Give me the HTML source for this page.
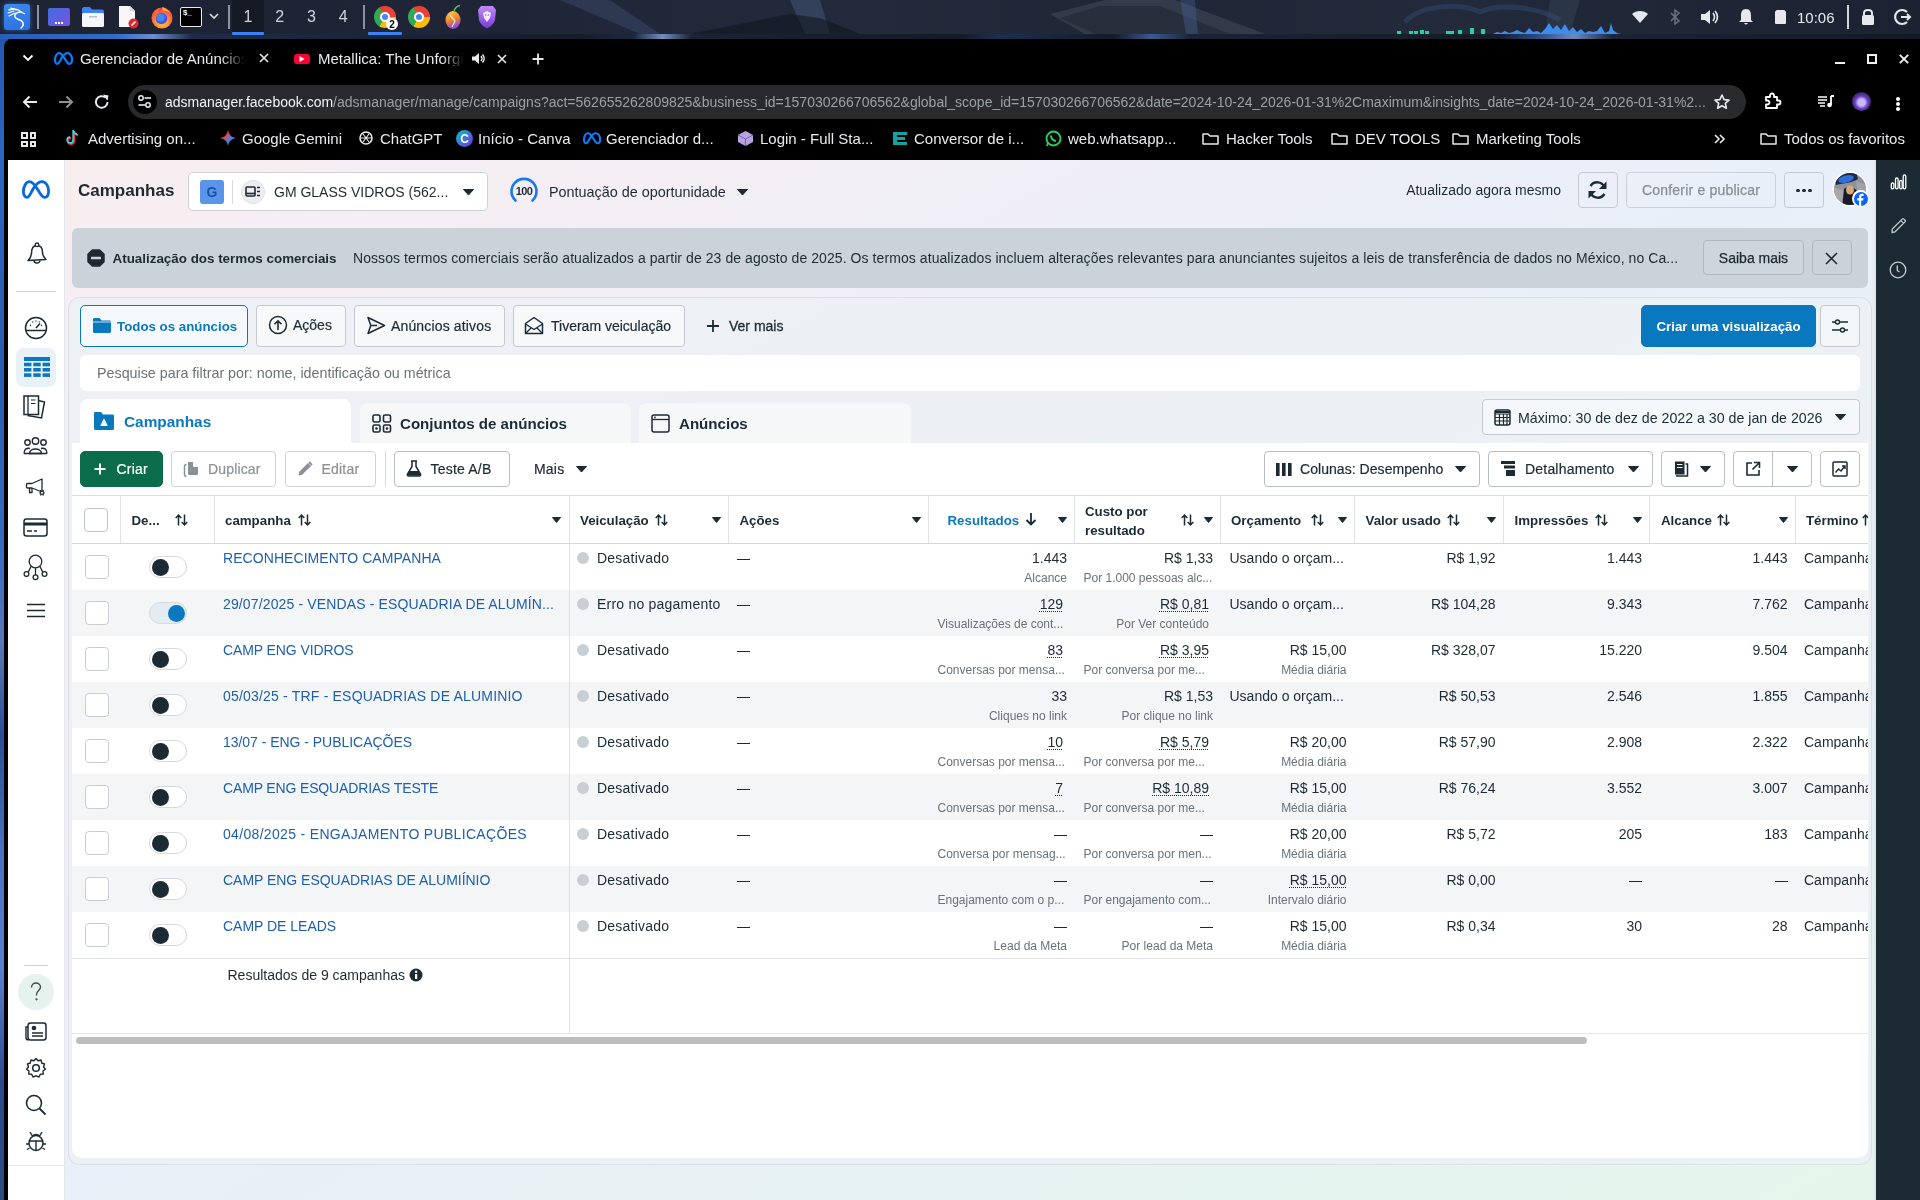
<!DOCTYPE html>
<html><head><meta charset="utf-8"><title>Gerenciador de Anúncios</title>
<style>
html,body{margin:0;padding:0;}
body{width:1920px;height:1200px;overflow:hidden;position:relative;font-family:"Liberation Sans", sans-serif;background:#161c2a;}
.a{position:absolute;box-sizing:border-box;}
.t{position:absolute;white-space:nowrap;font-family:"Liberation Sans", sans-serif;}
svg.a{overflow:visible;}
</style></head><body>
<div id="root" style="position:absolute;left:0;top:0;width:1920px;height:1200px;overflow:hidden;will-change:transform;">
<div class="a" style="left:0px;top:0px;width:1920px;height:39px;background:linear-gradient(90deg,#1d2333 0%,#1f2536 25%,#222a3b 45%,#1f2636 60%,#222a3b 75%,#1c2231 100%);"></div>
<svg class="a" style="left:0px;top:0px;" width="1920" height="39" viewBox="0 0 1920 39"><polygon points="560,0 610,0 660,34 640,34" fill="#5a7ab0" opacity="0.22"/><polygon points="790,0 820,0 830,34 805,34" fill="#6a8ac0" opacity="0.25"/><polygon points="690,34 790,14 820,18 860,34" fill="#10141c" opacity="0.55"/><polygon points="1050,14 1105,0 1175,0 1265,34 1085,34" fill="#3b4252" opacity="0.75"/><polygon points="1060,18 1100,6 1160,6 1230,34 1095,34" fill="#262c38" opacity="0.8"/><polygon points="1180,0 1195,0 1198,34 1186,34" fill="#4a6aa0" opacity="0.35"/><path d="M1405 22 C1420 5 1460 2 1480 12 C1500 2 1540 8 1560 20" stroke="#3a5a8a" stroke-width="5" fill="none" opacity="0.35"/><polygon points="1550,0 1580,0 1570,34 1545,34" fill="#4a5a78" opacity="0.25"/></svg>
<div class="a" style="left:0px;top:34px;width:1920px;height:5px;background:linear-gradient(90deg,#2a5fb5 0%,#2f6cc4 6%,#6a8fd0 8%,#1c2c48 10%,#161d2c 30%,#1a2840 33%,#6f8fc0 34.5%,#1a2436 36%,#141a26 50%,#1a3050 52%,#141b28 58%,#3a5a90 60%,#1a2436 62%,#161c28 78%,#2a4a80 80%,#6a8ac0 82%,#1a2436 84%,#131a26 100%);"></div>
<div class="a" style="left:4px;top:4px;width:26px;height:26px;background:linear-gradient(160deg,#3d8bf0,#2a6fe0);border-radius:3px;box-shadow:0 0 5px rgba(60,140,255,0.6);"></div>
<svg class="a" style="left:6px;top:6px;" width="22" height="22" viewBox="0 0 22 22"><path d="M3 4 C7 2 12 3 15 6 C11 6 8 8 9 11 C10 14 16 13 17 17 C18 20 16 21 15 22" stroke="#fff" stroke-width="1.5" fill="none" stroke-linecap="round"/><path d="M2 7 L8 5 M3 10 L9 7 M5 2 L10 4" stroke="#fff" stroke-width="1.1" stroke-linecap="round"/><path d="M15 6 L19 8" stroke="#fff" stroke-width="1.2"/></svg>
<div class="a" style="left:37px;top:5px;width:2px;height:24px;background:#8a93a5;"></div>
<div class="a" style="left:48px;top:8px;width:22px;height:18px;background:linear-gradient(135deg,#3f6ee8,#7a52d8);border-radius:2px;"></div>
<div class="a" style="left:55px;top:22px;width:8px;height:2px;background:repeating-linear-gradient(90deg,#fff 0 2px,transparent 2px 3px);"></div>
<svg class="a" style="left:81px;top:6px;" width="24" height="22" viewBox="0 0 24 22"><path d="M1 3 C1 2 2 1 3 1 H9 L11 3.5 H21 C22 3.5 23 4.5 23 5.5 V8 H1 Z" fill="#3b82f6"/><rect x="1" y="7" width="22" height="14" rx="1.5" fill="#f4f6f9"/><rect x="8" y="10" width="8" height="1.5" fill="#b8bec8"/></svg>
<svg class="a" style="left:117px;top:5px;" width="22" height="24" viewBox="0 0 22 24"><path d="M2 1 H13 L18 6 V22 H2 Z" fill="#f7f7f8"/><path d="M13 1 V6 H18 Z" fill="#d6d9de"/><circle cx="16.5" cy="18.5" r="5" fill="#e0282e"/><path d="M14.5 20.5 L18.5 16.5" stroke="#fff" stroke-width="1.6"/></svg>
<svg class="a" style="left:150px;top:5px;" width="24" height="24" viewBox="0 0 24 24"><defs><radialGradient id="ffg" cx="0.5" cy="0.7" r="0.7"><stop offset="0" stop-color="#ffd24a"/><stop offset="0.5" stop-color="#ff8a2a"/><stop offset="1" stop-color="#e8305a"/></radialGradient></defs><circle cx="12" cy="13" r="10.5" fill="url(#ffg)"/><path d="M12 2 C16 3 20 6 21 10 C19 6 15 5 13 6 Z" fill="#ffb03a"/><circle cx="11.5" cy="13.5" r="5.8" fill="#5a4ee0"/><circle cx="10.5" cy="12.5" r="4" fill="#3a8af0"/><path d="M3 9 C5 4 9 3 11 3 C8 5 6 8 7 12 Z" fill="#ff6a2a"/></svg>
<div class="a" style="left:180px;top:7px;width:22px;height:20px;background:#000;border:1.5px solid #e8e8e8;border-radius:2px;"></div>
<div class="t " style="top:9.23px;font-size:8px;line-height:8px;color:#fff;font-weight:bold;left:183px;">$_</div>
<svg class="a" style="left:209px;top:13px;" width="10" height="6" viewBox="0 0 10 6"><path d="M1 1 L5 5 L9 1" stroke="#ddd" stroke-width="1.6" fill="none"/></svg>
<div class="a" style="left:228px;top:5px;width:2px;height:24px;background:#8a93a5;"></div>
<div class="a" style="left:232px;top:0px;width:32px;height:34px;background:rgba(0,0,0,0.28);"></div>
<div class="a" style="left:232px;top:32px;width:32px;height:3px;background:#3b82f6;border-radius:1px;"></div>
<div class="t " style="top:9.46px;font-size:16px;line-height:16px;color:#d0d4dc;left:248.0px;transform:translateX(-50%);">1</div>
<div class="t " style="top:9.46px;font-size:16px;line-height:16px;color:#d0d4dc;left:279.7px;transform:translateX(-50%);">2</div>
<div class="t " style="top:9.46px;font-size:16px;line-height:16px;color:#d0d4dc;left:311.4px;transform:translateX(-50%);">3</div>
<div class="t " style="top:9.46px;font-size:16px;line-height:16px;color:#d0d4dc;left:343.1px;transform:translateX(-50%);">4</div>
<div class="a" style="left:363px;top:5px;width:2px;height:24px;background:#8a93a5;"></div>
<div class="a" style="left:368px;top:32px;width:34px;height:3px;background:#3b82f6;border-radius:1px;"></div>
<div class="a" style="left:374px;top:6px;width:22px;height:22px;background:conic-gradient(from -30deg,#ea4335 0 120deg,#fbbc04 120deg 240deg,#34a853 240deg 360deg);border-radius:50%;"></div>
<div class="a" style="left:380px;top:12px;width:10px;height:10px;background:#4285f4;border:2px solid #fff;border-radius:50%;"></div>
<div class="a" style="left:408px;top:6px;width:22px;height:22px;background:conic-gradient(from -30deg,#ea4335 0 120deg,#fbbc04 120deg 240deg,#34a853 240deg 360deg);border-radius:50%;"></div>
<div class="a" style="left:414px;top:12px;width:10px;height:10px;background:#4285f4;border:2px solid #fff;border-radius:50%;"></div>
<div class="a" style="left:386px;top:18px;width:12px;height:12px;background:#fff;border-radius:50%;"></div>
<div class="t " style="top:19.54px;font-size:10px;line-height:10px;color:#000;font-weight:bold;left:392px;transform:translateX(-50%);">2</div>
<svg class="a" style="left:444px;top:5px;" width="20" height="25" viewBox="0 0 20 25"><defs><linearGradient id="org" x1="0" y1="0" x2="0.3" y2="1"><stop offset="0" stop-color="#ffd84a"/><stop offset="0.55" stop-color="#f08a2a"/><stop offset="1" stop-color="#8a4ad8"/></linearGradient></defs><ellipse cx="9" cy="15" rx="7.5" ry="9" fill="url(#org)"/><path d="M10 6 C11 3 13 1 16 0.5" stroke="#5ac85a" stroke-width="1.5" fill="none"/><path d="M6 10 L11 16 L8 22" stroke="#fff" stroke-width="1.2" fill="none" opacity="0.8"/></svg>
<svg class="a" style="left:477px;top:5px;" width="20" height="24" viewBox="0 0 20 24"><defs><linearGradient id="brv" x1="0" y1="0" x2="0" y2="1"><stop offset="0" stop-color="#c08af8"/><stop offset="1" stop-color="#7a3ad8"/></linearGradient></defs><path d="M4 1 H16 L19 5 L18 15 C17 19 13 22 10 23.5 C7 22 3 19 2 15 L1 5 Z" fill="url(#brv)"/><path d="M6 8 L10 6 L14 8 L13 13 L10 17 L7 13 Z" fill="#fff" opacity="0.85"/><path d="M8 10 H9.3 M10.7 10 H12" stroke="#7a3ad8" stroke-width="1"/></svg>
<div class="a" style="left:1397px;top:31px;width:4px;height:3px;background:#22d3a0;"></div>
<div class="a" style="left:1409px;top:31px;width:4px;height:3px;background:#22d3a0;"></div>
<div class="a" style="left:1414px;top:31px;width:4px;height:3px;background:#22d3a0;"></div>
<div class="a" style="left:1420px;top:30px;width:4px;height:4px;background:#22d3a0;"></div>
<div class="a" style="left:1425px;top:31px;width:4px;height:3px;background:#22d3a0;"></div>
<div class="a" style="left:1446px;top:31px;width:4px;height:3px;background:#22d3a0;"></div>
<div class="a" style="left:1450px;top:31px;width:4px;height:3px;background:#22d3a0;"></div>
<div class="a" style="left:1458px;top:30px;width:4px;height:4px;background:#22d3a0;"></div>
<div class="a" style="left:1470px;top:28px;width:4px;height:6px;background:#22d3a0;"></div>
<div class="a" style="left:1481px;top:29px;width:4px;height:5px;background:#22d3a0;"></div>
<svg class="a" style="left:1493px;top:20px;" width="130" height="14" viewBox="0 0 130 14"><path d="M0 14 L4 12 L8 13 L12 11 L16 13 L20 12 L24 10 L28 12 L32 13 L36 8 L40 12 L44 11 L48 13 L52 9 L56 3 L60 9 L64 5 L68 10 L72 4 L76 11 L80 7 L84 12 L88 9 L92 13 L96 11 L100 12 L104 11 L108 6 L112 13 L116 11 L118 3 L120 10 L124 13 L128 14 L130 14 Z" fill="#3b8ef0"/></svg>
<svg class="a" style="left:1631px;top:10px;" width="18" height="14" viewBox="0 0 18 14"><path d="M9 13 L1 4 C5 0 13 0 17 4 Z" fill="#e6e8ec"/></svg>
<svg class="a" style="left:1669px;top:8px;" width="12" height="18" viewBox="0 0 12 18"><path d="M2 5 L10 13 L6 16 L6 2 L10 5 L2 13" stroke="#6b7280" stroke-width="1.5" fill="none"/></svg>
<svg class="a" style="left:1700px;top:8px;" width="20" height="18" viewBox="0 0 20 18"><path d="M1 6 H5 L10 2 V16 L5 12 H1 Z" fill="#e6e8ec"/><path d="M13 5 Q16 9 13 13 M15 3 Q20 9 15 15" stroke="#e6e8ec" stroke-width="1.6" fill="none"/></svg>
<svg class="a" style="left:1737px;top:8px;" width="18" height="18" viewBox="0 0 18 18"><path d="M9 1 C5 1 4 4 4 8 V12 L2 14 H16 L14 12 V8 C14 4 13 1 9 1 Z M7 15 Q9 18 11 15 Z" fill="#e6e8ec"/></svg>
<div class="a" style="left:1775px;top:11px;width:11px;height:13px;background:#e6e8ec;border-radius:1px;"></div>
<div class="a" style="left:1776px;top:9.5px;width:9px;height:2px;background:#e6e8ec;border-radius:1px 1px 0 0;"></div>
<div class="t " style="top:9.80px;font-size:15px;line-height:15px;color:#e6e8ec;left:1797px;">10:06</div>
<div class="a" style="left:1847px;top:5px;width:2px;height:24px;background:#cfd3da;"></div>
<svg class="a" style="left:1860px;top:7px;" width="16" height="19" viewBox="0 0 16 19"><path d="M4 8 V6 C4 2 12 2 12 6 V8" stroke="#e6e8ec" stroke-width="2" fill="none"/><rect x="2" y="8" width="12" height="10" rx="1.5" fill="#e6e8ec"/></svg>
<svg class="a" style="left:1893px;top:8px;" width="18" height="18" viewBox="0 0 18 18"><path d="M14 4 A7 7 0 1 0 14 14" stroke="#e6e8ec" stroke-width="2.2" fill="none"/><path d="M8 9 H17 M14 6 L17 9 L14 12" stroke="#e6e8ec" stroke-width="2" fill="none"/></svg>
<div class="a" style="left:0px;top:39px;width:8px;height:1161px;background:linear-gradient(180deg,#2458b0 0%,#2d66c0 10%,#2a5cb0 30%,#3a6cc0 45%,#5a78b8 52%,#2a4f98 60%,#4a70c0 70%,#5a80d0 80%,#2a4a90 90%,#304a80 100%);"></div>
<div class="a" style="left:4px;top:39px;width:1916px;height:1161px;background:#000;border-top-left-radius:8px;"></div>
<svg class="a" style="left:22px;top:54px;" width="12" height="8" viewBox="0 0 12 8"><path d="M1.5 1.5 L6 6 L10.5 1.5" stroke="#fff" stroke-width="1.8" fill="none"/></svg>
<svg class="a" style="left:54px;top:52px;" width="19" height="13" viewBox="0 0 28 19"><path d="M7.5 1.6 C11 1.6 13.5 6 16 10 C18.5 14 20 17.4 22.6 17.4 C25 17.4 26.6 14.8 26.6 11 C26.6 6 24 1.6 19.6 1.6 C16 1.6 13.5 5 11 9 C9 12.5 7.5 17.4 5 17.4 C3 17.4 1.4 15 1.4 11.5 C1.4 6.5 4 1.6 7.5 1.6 Z" stroke="#0a7cff" stroke-width="3.2" fill="none"/></svg>
<div class="t" style="left:80px;top:51.3px;font-size:15px;line-height:15px;color:#e8eaed;width:165px;overflow:hidden;-webkit-mask-image:linear-gradient(90deg,#000 85%,transparent);">Gerenciador de Anúncios</div>
<svg class="a" style="left:259px;top:53px;" width="10" height="10" viewBox="0 0 10 10"><path d="M1 1 L9 9 M9 1 L1 9" stroke="#e8eaed" stroke-width="1.6"/></svg>
<div class="a" style="left:294px;top:54px;width:16px;height:10px;background:#ff0033;border-radius:3px;"></div>
<svg class="a" style="left:299px;top:56px;" width="6" height="6" viewBox="0 0 6 6"><path d="M0.5 0 L5.5 3 L0.5 6 Z" fill="#fff"/></svg>
<div class="t" style="left:318px;top:51.3px;font-size:15px;line-height:15px;color:#e8eaed;width:146px;overflow:hidden;-webkit-mask-image:linear-gradient(90deg,#000 85%,transparent);">Metallica: The Unforgiven</div>
<svg class="a" style="left:471px;top:52px;" width="14" height="13" viewBox="0 0 14 13"><path d="M1 4.5 H4 L8 1 V12 L4 8.5 H1 Z" fill="#e8eaed"/><path d="M10 4 Q12 6.5 10 9 M11.5 2.5 Q15 6.5 11.5 10.5" stroke="#e8eaed" stroke-width="1.4" fill="none"/></svg>
<svg class="a" style="left:497px;top:54px;" width="10" height="10" viewBox="0 0 10 10"><path d="M1 1 L9 9 M9 1 L1 9" stroke="#e8eaed" stroke-width="1.6"/></svg>
<svg class="a" style="left:532px;top:53px;" width="12" height="12" viewBox="0 0 12 12"><path d="M6 0.5 V11.5 M0.5 6 H11.5" stroke="#e8eaed" stroke-width="1.8"/></svg>
<div class="a" style="left:1835px;top:62px;width:10px;height:2px;background:#f0f0f0;"></div>
<div class="a" style="left:1867px;top:54px;width:10px;height:10px;border:2px solid #f0f0f0;"></div>
<svg class="a" style="left:1899px;top:54px;" width="10" height="10" viewBox="0 0 10 10"><path d="M0.8 0.8 L9.2 9.2 M9.2 0.8 L0.8 9.2" stroke="#f0f0f0" stroke-width="1.9"/></svg>
<svg class="a" style="left:22px;top:95px;" width="16" height="14" viewBox="0 0 16 14"><path d="M15 7 H2 M7.5 1.5 L2 7 L7.5 12.5" stroke="#e8eaed" stroke-width="2" fill="none"/></svg>
<svg class="a" style="left:58px;top:95px;" width="16" height="14" viewBox="0 0 16 14"><path d="M1 7 H14 M8.5 1.5 L14 7 L8.5 12.5" stroke="#8c8f94" stroke-width="2" fill="none"/></svg>
<svg class="a" style="left:94px;top:94px;" width="16" height="16" viewBox="0 0 16 16"><path d="M13.5 8 A5.8 5.8 0 1 1 11.5 3.6" stroke="#e8eaed" stroke-width="2" fill="none"/><path d="M9 0.5 L14.5 1.5 L13.5 6.5" fill="#e8eaed"/><path d="M10 1 L14 2 L13 6 Z" fill="#e8eaed"/></svg>
<div class="a" style="left:128px;top:85px;width:1618px;height:34px;background:#282a2d;border-radius:17px;"></div>
<div class="a" style="left:133px;top:90px;width:24px;height:24px;background:#000;border-radius:50%;"></div>
<svg class="a" style="left:137px;top:94px;" width="16" height="16" viewBox="0 0 16 16"><circle cx="4" cy="4" r="2.2" stroke="#e8eaed" stroke-width="1.5" fill="none"/><path d="M7.5 4 H14" stroke="#e8eaed" stroke-width="1.6"/><circle cx="11" cy="11" r="2.2" stroke="#e8eaed" stroke-width="1.5" fill="none"/><path d="M1.5 11 H8" stroke="#e8eaed" stroke-width="1.6"/></svg>
<div class="t" style="left:165px;top:94.8px;font-size:14px;line-height:14px;color:#9aa0a6;"><span style="color:#f1f3f4">adsmanager.facebook.com</span>/adsmanager/manage/campaigns?act=562655262809825&amp;business_id=157030266706562&amp;global_scope_id=157030266706562&amp;date=2024-10-24_2026-01-31%2Cmaximum&amp;insights_date=2024-10-24_2026-01-31%2...</div>
<svg class="a" style="left:1714px;top:94px;" width="16" height="16" viewBox="0 0 16 16"><path d="M8 1 L10.1 5.6 L15 6.1 L11.3 9.4 L12.4 14.3 L8 11.8 L3.6 14.3 L4.7 9.4 L1 6.1 L5.9 5.6 Z" stroke="#e8eaed" stroke-width="1.6" fill="none" stroke-linejoin="round"/></svg>
<svg class="a" style="left:1764px;top:92px;" width="18" height="18" viewBox="0 0 18 18"><path d="M2 5 H6 V3.5 A2 2 0 0 1 10 3.5 V5 H13 V8.5 H14.5 A2 2 0 0 1 14.5 12.5 H13 V16 H2 V12.5 H3.5 A2 2 0 0 0 3.5 8.5 H2 Z" stroke="#fff" stroke-width="1.8" fill="none" stroke-linejoin="round"/></svg>
<svg class="a" style="left:1818px;top:95px;" width="17" height="13" viewBox="0 0 17 13"><path d="M0 2 H9 M0 5 H9 M0 8 H7 M2 11 H7" stroke="#fff" stroke-width="1.6"/><path d="M13 1 H16 M13 1 V10" stroke="#fff" stroke-width="1.8"/><circle cx="11.5" cy="10" r="2.3" fill="#fff"/></svg>
<div class="a" style="left:1852px;top:92px;width:19px;height:19px;background:radial-gradient(circle at 50% 55%,#c8b8ff 0 25%,#6a3fc0 45%,#2a1f4a 80%);border-radius:50%;"></div>
<div class="a" style="left:1896px;top:97px;width:4px;height:4px;background:#fff;border-radius:50%;"></div>
<div class="a" style="left:1896px;top:102px;width:4px;height:4px;background:#fff;border-radius:50%;"></div>
<div class="a" style="left:1896px;top:107px;width:4px;height:4px;background:#fff;border-radius:50%;"></div>
<div class="a" style="left:21px;top:132px;width:6.5px;height:6.5px;border:2px solid #e8eaed;border-radius:0.5px;"></div>
<div class="a" style="left:21px;top:140.5px;width:6.5px;height:6.5px;border:2px solid #e8eaed;border-radius:0.5px;"></div>
<div class="a" style="left:29.5px;top:132px;width:6.5px;height:6.5px;border:2px solid #e8eaed;border-radius:0.5px;"></div>
<div class="a" style="left:29.5px;top:140.5px;width:6.5px;height:6.5px;border:2px solid #e8eaed;border-radius:0.5px;"></div>
<div class="t " style="top:131.30px;font-size:15px;line-height:15px;color:#e8eaed;left:88px;">Advertising on...</div>
<svg class="a" style="left:66px;top:129px;" width="14" height="17" viewBox="0 0 14 17"><path d="M8 2 V12 A3 3 0 1 1 5 9 M8 2 Q9 6 12 6" stroke="#ff2d55" stroke-width="2" fill="none"/><path d="M7 1 V11 A3 3 0 1 1 4 8 M7 1 Q8 5 11 5" stroke="#25f4ee" stroke-width="1.3" fill="none"/></svg>
<div class="t " style="top:131.30px;font-size:15px;line-height:15px;color:#e8eaed;left:242px;">Google Gemini</div>
<svg class="a" style="left:220px;top:130px;" width="16" height="16" viewBox="0 0 16 16"><path d="M8 0 Q9 7 16 8 Q9 9 8 16 Q7 9 0 8 Q7 7 8 0 Z" fill="url(#gg)"/><defs><linearGradient id="gg" x1="0" y1="0" x2="1" y2="1"><stop offset="0" stop-color="#f4b400"/><stop offset="0.35" stop-color="#e8453c"/><stop offset="0.6" stop-color="#4285f4"/><stop offset="1" stop-color="#34a853"/></linearGradient></defs></svg>
<div class="t " style="top:131.30px;font-size:15px;line-height:15px;color:#e8eaed;left:380px;">ChatGPT</div>
<svg class="a" style="left:358px;top:130px;" width="16" height="16" viewBox="0 0 16 16"><circle cx="8" cy="8" r="6" stroke="#e8eaed" stroke-width="1.6" fill="none"/><path d="M5 4 L11 12 M11 4 L5 12 M3 8 H13" stroke="#e8eaed" stroke-width="1.1"/></svg>
<div class="t " style="top:131.30px;font-size:15px;line-height:15px;color:#e8eaed;left:478px;">Início - Canva</div>
<div class="a" style="left:456px;top:130px;width:17px;height:17px;background:linear-gradient(135deg,#00c4cc,#7d2ae8);border-radius:50%;"></div>
<div class="t " style="top:132.84px;font-size:12px;line-height:12px;color:#fff;font-weight:bold;left:464.5px;transform:translateX(-50%);">C</div>
<div class="t " style="top:131.30px;font-size:15px;line-height:15px;color:#e8eaed;left:606px;">Gerenciador d...</div>
<svg class="a" style="left:583px;top:132px;" width="18" height="12.5" viewBox="0 0 28 19"><path d="M7.5 1.6 C11 1.6 13.5 6 16 10 C18.5 14 20 17.4 22.6 17.4 C25 17.4 26.6 14.8 26.6 11 C26.6 6 24 1.6 19.6 1.6 C16 1.6 13.5 5 11 9 C9 12.5 7.5 17.4 5 17.4 C3 17.4 1.4 15 1.4 11.5 C1.4 6.5 4 1.6 7.5 1.6 Z" stroke="#0a7cff" stroke-width="3.2" fill="none"/></svg>
<div class="t " style="top:131.30px;font-size:15px;line-height:15px;color:#e8eaed;left:760px;">Login - Full Sta...</div>
<svg class="a" style="left:737px;top:130px;" width="17" height="17" viewBox="0 0 17 17"><path d="M8.5 1 L16 5 V12 L8.5 16 L1 12 V5 Z" fill="#b9a3e3"/><path d="M8.5 9 L16 5 M8.5 9 L1 5 M8.5 9 V16" stroke="#7d5bb5" stroke-width="1"/></svg>
<div class="t " style="top:131.30px;font-size:15px;line-height:15px;color:#e8eaed;left:914px;">Conversor de i...</div>
<svg class="a" style="left:891px;top:131px;" width="17" height="15" viewBox="0 0 17 15"><path d="M2 1 H16 V4 H6 V6 H14 V9 H6 V11 H16 V14 H2 Z" fill="#14a3a3"/></svg>
<div class="t " style="top:131.30px;font-size:15px;line-height:15px;color:#e8eaed;left:1068px;">web.whatsapp...</div>
<svg class="a" style="left:1045px;top:130px;" width="17" height="17" viewBox="0 0 17 17"><circle cx="8.5" cy="8.5" r="7" stroke="#25d366" stroke-width="1.8" fill="none"/><path d="M2 16 L3.2 12" stroke="#25d366" stroke-width="1.8"/><path d="M6 5.5 Q6 10 11 11" stroke="#25d366" stroke-width="2" fill="none"/></svg>
<div class="t " style="top:131.30px;font-size:15px;line-height:15px;color:#e8eaed;left:1226px;">Hacker Tools</div>
<svg class="a" style="left:1202px;top:132px;" width="17" height="13" viewBox="0 0 17 13"><path d="M1 2 H6 L8 4 H16 V12 H1 Z" stroke="#e8eaed" stroke-width="1.5" fill="none" stroke-linejoin="round"/></svg>
<div class="t " style="top:131.30px;font-size:15px;line-height:15px;color:#e8eaed;left:1355px;">DEV TOOLS</div>
<svg class="a" style="left:1331px;top:132px;" width="17" height="13" viewBox="0 0 17 13"><path d="M1 2 H6 L8 4 H16 V12 H1 Z" stroke="#e8eaed" stroke-width="1.5" fill="none" stroke-linejoin="round"/></svg>
<div class="t " style="top:131.30px;font-size:15px;line-height:15px;color:#e8eaed;left:1476px;">Marketing Tools</div>
<svg class="a" style="left:1452px;top:132px;" width="17" height="13" viewBox="0 0 17 13"><path d="M1 2 H6 L8 4 H16 V12 H1 Z" stroke="#e8eaed" stroke-width="1.5" fill="none" stroke-linejoin="round"/></svg>
<div class="t " style="top:131.30px;font-size:15px;line-height:15px;color:#e8eaed;left:1784px;">Todos os favoritos</div>
<svg class="a" style="left:1760px;top:132px;" width="17" height="13" viewBox="0 0 17 13"><path d="M1 2 H6 L8 4 H16 V12 H1 Z" stroke="#e8eaed" stroke-width="1.5" fill="none" stroke-linejoin="round"/></svg>
<svg class="a" style="left:1714px;top:134px;" width="11" height="10" viewBox="0 0 11 10"><path d="M1 1 L5 5 L1 9 M6 1 L10 5 L6 9" stroke="#e8eaed" stroke-width="1.6" fill="none"/></svg>
<div class="a" style="left:8px;top:160px;width:1868px;height:1040px;background:linear-gradient(to bottom right,#f9eef0 0%,#f2eef5 22%,#e9eff9 48%,#e7f2f3 70%,#e4f6ec 100%);"></div>
<div class="a" style="left:8px;top:160px;width:57px;height:1040px;background:#fff;border-right:1px solid #e3e6ea;"></div>
<div class="a" style="left:8px;top:1165px;width:56px;height:1px;background:#e3e6ea;"></div>
<svg class="a" style="left:22px;top:180px;" width="28" height="19" viewBox="0 0 28 19"><path d="M7.5 1.6 C11 1.6 13.5 6 16 10 C18.5 14 20 17.4 22.6 17.4 C25 17.4 26.6 14.8 26.6 11 C26.6 6 24 1.6 19.6 1.6 C16 1.6 13.5 5 11 9 C9 12.5 7.5 17.4 5 17.4 C3 17.4 1.4 15 1.4 11.5 C1.4 6.5 4 1.6 7.5 1.6 Z" stroke="#0668e1" stroke-width="2.8" fill="none"/></svg>
<svg class="a" style="left:26px;top:242px;" width="22" height="24" viewBox="0 0 22 24"><path d="M11 3.5 C6.5 3.5 5.5 7 5.5 11 C5.5 14.5 4 16.5 2 18.5 L20 17.5 C18 15.5 16.5 13.5 16.5 10.5 C16.5 6.5 15 3.5 11 3.5 Z" stroke="#1c2b33" stroke-width="1.5" fill="none" stroke-linejoin="round"/><circle cx="11" cy="2.8" r="1.8" stroke="#1c2b33" stroke-width="1.3" fill="#fff"/><path d="M8 18.5 A3 2.6 0 0 0 14 18.3" stroke="#1c2b33" stroke-width="1.4" fill="none"/></svg>
<div class="a" style="left:16px;top:291px;width:40px;height:1px;background:#cfd3d8;"></div>
<svg class="a" style="left:24px;top:316px;" width="24" height="24" viewBox="0 0 24 24"><circle cx="12" cy="12" r="10.5" stroke="#1c2b33" stroke-width="1.5" fill="none"/><path d="M2 14.5 H22" stroke="#1c2b33" stroke-width="1.5"/><path d="M12 12 L16 7.5" stroke="#1c2b33" stroke-width="1.6"/><path d="M6 9 L7 9.6 M8.5 5.5 L9 6.5 M12 4.5 V5.5 M15.5 5.5 L15 6.5 M18 9 L17 9.6" stroke="#1c2b33" stroke-width="1.3"/></svg>
<div class="a" style="left:16px;top:348px;width:40px;height:39px;background:#e8f0f8;border-radius:8px;"></div>
<svg class="a" style="left:24px;top:357px;" width="26" height="21" viewBox="0 0 26 21"><rect x="0" y="0" width="26" height="4" fill="#0a78be"/><rect x="0.0" y="5.7" width="7.4" height="3.6" fill="#0a78be"/><rect x="9.3" y="5.7" width="7.4" height="3.6" fill="#0a78be"/><rect x="18.6" y="5.7" width="7.4" height="3.6" fill="#0a78be"/><rect x="0.0" y="11.0" width="7.4" height="3.6" fill="#0a78be"/><rect x="9.3" y="11.0" width="7.4" height="3.6" fill="#0a78be"/><rect x="18.6" y="11.0" width="7.4" height="3.6" fill="#0a78be"/><rect x="0.0" y="16.3" width="7.4" height="3.6" fill="#0a78be"/><rect x="9.3" y="16.3" width="7.4" height="3.6" fill="#0a78be"/><rect x="18.6" y="16.3" width="7.4" height="3.6" fill="#0a78be"/></svg>
<svg class="a" style="left:23px;top:395px;" width="25" height="25" viewBox="0 0 25 25"><rect x="1" y="1" width="14.5" height="18.5" stroke="#1c2b33" stroke-width="1.5" fill="#fff"/><path d="M5 1 V19.5" stroke="#1c2b33" stroke-width="1.3"/><path d="M8 5 H12.5 M8 8.5 H12.5" stroke="#1c2b33" stroke-width="1.2"/><path d="M15.5 5.5 L21.5 7 L18.5 23 L4.5 20.5" stroke="#1c2b33" stroke-width="1.5" fill="none"/></svg>
<svg class="a" style="left:23px;top:436px;" width="25" height="22" viewBox="0 0 25 22"><circle cx="12.5" cy="5" r="3.2" stroke="#1c2b33" stroke-width="1.4" fill="none"/><circle cx="4.5" cy="6.5" r="2.7" stroke="#1c2b33" stroke-width="1.4" fill="none"/><circle cx="20.5" cy="6.5" r="2.7" stroke="#1c2b33" stroke-width="1.4" fill="none"/><path d="M6.5 17.5 C6.5 11.5 18.5 11.5 18.5 17.5 Z" stroke="#1c2b33" stroke-width="1.4" fill="none"/><path d="M1 17.5 C1 13 4 11.5 7 12.5 M24 17.5 C24 13 21 11.5 18 12.5 M1 17.5 H24" stroke="#1c2b33" stroke-width="1.4" fill="none"/></svg>
<svg class="a" style="left:26px;top:478px;" width="20" height="20" viewBox="0 0 20 20"><path d="M1.5 5.5 H6 L16 1 V14 L6 10 H1.5 C0.8 10 0.5 9.5 0.5 9 V6.5 C0.5 6 0.8 5.5 1.5 5.5 Z" stroke="#1c2b33" stroke-width="1.3" fill="none" stroke-linejoin="round"/><path d="M3.5 10 V14.5 H6 V10" stroke="#1c2b33" stroke-width="1.3" fill="none"/><path d="M14.5 12 L17.5 17.5 M17.5 12 L14.5 17.5 M13.3 14.8 H18.7" stroke="#1c2b33" stroke-width="1.3"/><circle cx="16" cy="14.8" r="1.6" fill="#fff" stroke="#1c2b33" stroke-width="1.1"/></svg>
<svg class="a" style="left:23px;top:518px;" width="25" height="19" viewBox="0 0 25 19"><rect x="1" y="1" width="23" height="17" rx="2.5" stroke="#1c2b33" stroke-width="1.5" fill="none"/><rect x="1" y="4.5" width="23" height="3" fill="#1c2b33"/><path d="M4 13 H9 M11 13 H14" stroke="#1c2b33" stroke-width="1.3"/></svg>
<svg class="a" style="left:23px;top:554px;" width="25" height="27" viewBox="0 0 25 27"><circle cx="12.5" cy="7.5" r="6.3" stroke="#1c2b33" stroke-width="1.3" fill="none"/><circle cx="3.5" cy="20" r="2.4" stroke="#1c2b33" stroke-width="1.3" fill="none"/><circle cx="12.5" cy="23.3" r="2.4" stroke="#1c2b33" stroke-width="1.3" fill="none"/><circle cx="21.5" cy="20" r="2.4" stroke="#1c2b33" stroke-width="1.3" fill="none"/><path d="M12.5 13.8 V20.9 M8.2 12.2 L5.2 18.1 M16.8 12.2 L19.8 18.1" stroke="#1c2b33" stroke-width="1.3" fill="none"/></svg>
<svg class="a" style="left:26px;top:603px;" width="20" height="15" viewBox="0 0 20 15"><path d="M1 1.5 H19 M1 7.5 H19 M1 13.5 H19" stroke="#1c2b33" stroke-width="1.5"/></svg>
<div class="a" style="left:24px;top:965px;width:24px;height:1px;background:#cfd3d8;"></div>
<div class="a" style="left:18px;top:974px;width:36px;height:36px;background:#e6f2ed;border-radius:50%;"></div>
<svg class="a" style="left:29px;top:982px;" width="14" height="20" viewBox="0 0 14 20"><path d="M2.5 5.5 C2.5 2.8 4.5 1 7 1 C9.6 1 11.5 2.8 11.5 5.2 C11.5 8.2 7.5 8.8 7.5 12.5 V13.5" stroke="#3d4d55" stroke-width="1.4" fill="none"/><circle cx="7.5" cy="17.3" r="1.1" fill="#3d4d55"/></svg>
<svg class="a" style="left:25px;top:1022px;" width="22" height="19" viewBox="0 0 22 19"><rect x="3" y="1" width="18" height="17" rx="2.5" stroke="#1c2b33" stroke-width="1.5" fill="none"/><path d="M3 5 H1 V15.5 C1 17 2 18 3.5 18" stroke="#1c2b33" stroke-width="1.4" fill="none"/><circle cx="9" cy="6" r="2.3" fill="#1c2b33"/><path d="M7 11 H18 M7 14 H18" stroke="#1c2b33" stroke-width="1.4"/></svg>
<svg class="a" style="left:25px;top:1057px;" width="22" height="22" viewBox="0 0 22 22"><path d="M11 1.5 L13 3.8 L16 3 L16.7 6 L19.5 7 L18.5 10 L20.5 12.2 L18 14 L18.3 17 L15.3 17.2 L14 20 L11 18.8 L8 20 L6.7 17.2 L3.7 17 L4 14 L1.5 12.2 L3.5 10 L2.5 7 L5.3 6 L6 3 L9 3.8 Z" stroke="#1c2b33" stroke-width="1.4" fill="none" stroke-linejoin="round"/><circle cx="11" cy="11" r="3.3" stroke="#1c2b33" stroke-width="1.5" fill="none"/></svg>
<svg class="a" style="left:25px;top:1094px;" width="22" height="22" viewBox="0 0 22 22"><circle cx="9" cy="9" r="7.5" stroke="#1c2b33" stroke-width="1.6" fill="none"/><path d="M14.5 14.5 L20.5 20.5" stroke="#1c2b33" stroke-width="1.8"/></svg>
<svg class="a" style="left:25px;top:1130px;" width="22" height="22" viewBox="0 0 22 22"><ellipse cx="11" cy="13" rx="7" ry="7.5" stroke="#1c2b33" stroke-width="1.5" fill="none"/><path d="M4 11 H18 M11 11 V20.5 M7 5.5 L5 2 M15 5.5 L17 2 M7 6 Q11 3 15 6" stroke="#1c2b33" stroke-width="1.4" fill="none"/><path d="M4 14 H1 M18 14 H21 M4.5 18 L2 19.5 M17.5 18 L20 19.5" stroke="#1c2b33" stroke-width="1.3"/></svg>
<div class="a" style="left:1876px;top:160px;width:44px;height:1040px;background:#1c2a33;"></div>
<div class="a" style="left:1872px;top:160px;width:4px;height:1040px;background:linear-gradient(90deg,rgba(255,255,255,0),rgba(210,215,222,0.5));"></div>
<svg class="a" style="left:1890px;top:174px;" width="17" height="16" viewBox="0 0 17 16"><rect x="1.3" y="9" width="2.6" height="5.8" rx="1.3" stroke="#fff" stroke-width="1.3" fill="none"/><rect x="5.5" y="4" width="2.6" height="10.8" rx="1.3" stroke="#fff" stroke-width="1.3" fill="none"/><rect x="9.6" y="6.5" width="2.6" height="8.3" rx="1.3" stroke="#fff" stroke-width="1.3" fill="none"/><rect x="13.2" y="1" width="2.6" height="13.8" rx="1.3" stroke="#fff" stroke-width="1.3" fill="none"/></svg>
<svg class="a" style="left:1890px;top:217px;" width="17" height="17" viewBox="0 0 17 17"><path d="M2 15.5 L2.3 12 L12.2 2.1 C12.7 1.6 13.4 1.6 13.9 2.1 L15 3.2 C15.5 3.7 15.5 4.4 15 4.9 L5.1 14.8 Z M10.8 3.6 L13.6 6.4" stroke="#c4c9cd" stroke-width="1.3" fill="none" stroke-linejoin="round"/></svg>
<svg class="a" style="left:1889px;top:261px;" width="18" height="18" viewBox="0 0 18 18"><circle cx="9" cy="9" r="7.8" stroke="#c4c9cd" stroke-width="1.3" fill="none"/><path d="M8.3 4.5 V9.5 L10.5 11" stroke="#c4c9cd" stroke-width="1.4" fill="none"/></svg>
<div class="t " style="top:181.61px;font-size:17px;line-height:17px;color:#1c2b33;font-weight:bold;left:78px;">Campanhas</div>
<div class="a" style="left:188px;top:172px;width:300px;height:39px;background:#fff;border:1px solid #cdd2d7;border-radius:5px;"></div>
<div class="a" style="left:200px;top:180px;width:24px;height:24px;background:#5b95e9;border-radius:3px;"></div>
<div class="t " style="top:185.15px;font-size:14px;line-height:14px;color:#1b4fa3;font-weight:bold;left:212px;transform:translateX(-50%);">G</div>
<div class="a" style="left:232px;top:180px;width:1px;height:24px;background:#d6dadf;"></div>
<div class="a" style="left:241px;top:180px;width:24px;height:24px;background:#eceef1;border:1px solid #dde0e4;border-radius:50%;"></div>
<svg class="a" style="left:245px;top:185px;" width="16" height="14" viewBox="0 0 16 14"><rect x="1" y="2" width="9" height="9" rx="1" stroke="#1c2b33" stroke-width="1.6" fill="none"/><path d="M1 8.5 H10" stroke="#1c2b33" stroke-width="1.6"/><path d="M12 2.5 H15 M12 6.5 H15 M12 10.5 H15" stroke="#1c2b33" stroke-width="1.5"/></svg>
<div class="t " style="top:185.15px;font-size:14px;line-height:14px;color:#1c2b33;left:274px;">GM GLASS VIDROS (562...</div>
<svg class="a" style="left:462.5px;top:189.0px;" width="11" height="6" viewBox="0 0 11 6"><path d="M0.5 0.5 H10.5 L5.5 6 Z" fill="#1c2b33" stroke="#1c2b33" stroke-width="1" stroke-linejoin="round"/></svg>
<svg class="a" style="left:509px;top:176px;" width="30" height="30" viewBox="0 0 30 30"><path d="M6.5 24.5 A12.5 12.5 0 1 1 23.5 24.5" stroke="#1877f2" stroke-width="2.6" fill="none" stroke-linecap="round"/></svg>
<div class="t " style="top:186.19px;font-size:11px;line-height:11px;color:#1c2b33;font-weight:bold;letter-spacing:-0.6px;left:524px;transform:translateX(-50%);">100</div>
<div class="t " style="top:184.81px;font-size:14.4px;line-height:14.4px;color:#1c2b33;left:549px;">Pontuação de oportunidade</div>
<svg class="a" style="left:736.5px;top:189.0px;" width="11" height="6" viewBox="0 0 11 6"><path d="M0.5 0.5 H10.5 L5.5 6 Z" fill="#1c2b33" stroke="#1c2b33" stroke-width="1" stroke-linejoin="round"/></svg>
<div class="t " style="top:183.15px;font-size:14px;line-height:14px;color:#1c2b33;right:359px;">Atualizado agora mesmo</div>
<div class="a" style="left:1578px;top:172px;width:40px;height:36px;background:transparent;border:1px solid #c5cad0;border-radius:4px;"></div>
<svg class="a" style="left:1587px;top:180px;" width="22" height="20" viewBox="0 0 22 20"><path d="M17.5 7 A8 8 0 0 0 3.5 6" stroke="#1c2b33" stroke-width="2.4" fill="none"/><path d="M19 2.5 V8.5 H13" fill="#1c2b33"/><path d="M19.5 1.5 L19.5 9 L12 9 Z" fill="#1c2b33"/><path d="M3.5 13 A8 8 0 0 0 17.5 14" stroke="#1c2b33" stroke-width="2.4" fill="none"/><path d="M1.5 18.5 L1.5 11 L9 11 Z" fill="#1c2b33"/></svg>
<div class="a" style="left:1626px;top:172px;width:150px;height:36px;background:transparent;border:1px solid #cdd1d6;border-radius:4px;"></div>
<div class="t " style="top:183.15px;font-size:14px;line-height:14px;color:#8a8f94;letter-spacing:0.2px;left:1701px;transform:translateX(-50%);-webkit-text-stroke:0.25px #8a8f94;">Conferir e publicar</div>
<div class="a" style="left:1784px;top:172px;width:40px;height:36px;background:transparent;border:1px solid #c5cad0;border-radius:4px;"></div>
<div class="a" style="left:1796.2px;top:188.5px;width:3.6px;height:3.6px;background:#1c2b33;border-radius:50%;"></div>
<div class="a" style="left:1802.2px;top:188.5px;width:3.6px;height:3.6px;background:#1c2b33;border-radius:50%;"></div>
<div class="a" style="left:1808.2px;top:188.5px;width:3.6px;height:3.6px;background:#1c2b33;border-radius:50%;"></div>
<svg class="a" style="left:1832px;top:171px" width="36" height="36" viewBox="0 0 36 36"><defs><clipPath id="av"><circle cx="18" cy="18" r="16"/></clipPath></defs><circle cx="18" cy="18" r="17.5" fill="#fff"/><g clip-path="url(#av)"><rect x="0" y="0" width="36" height="36" fill="#8f9399"/><path d="M2 0 H24 L26 8 C20 12 12 12 4 14 Z" fill="#1c2b4a"/><ellipse cx="14" cy="8" rx="8" ry="3.5" fill="#2f6fd8" transform="rotate(-15 14 8)"/><path d="M0 16 L14 20 L20 36 H0 Z" fill="#a8a8ad"/><path d="M12 18 C16 14 24 16 26 22 L22 36 H10 Z" fill="#1a1c24"/><ellipse cx="18" cy="19" rx="4" ry="4.5" fill="#d8a878"/><path d="M24 10 L34 14 L34 24 L26 24 Z" fill="#a0a4aa"/></g></svg>
<div class="a" style="left:1852px;top:190px;width:17px;height:17px;background:#fff;border-radius:50%;"></div>
<div class="a" style="left:1853.5px;top:191.5px;width:14px;height:14px;background:#0866ff;border-radius:50%;"></div>
<svg class="a" style="left:1856px;top:193px;" width="9" height="13" viewBox="0 0 9 13"><path d="M5.2 13 V7.4 H7.2 L7.5 5.2 H5.2 V4 C5.2 3.3 5.5 2.9 6.3 2.9 H7.6 V1 C7.2 0.9 6.6 0.8 5.9 0.8 C4.2 0.8 3.1 1.8 3.1 3.7 V5.2 H1.2 V7.4 H3.1 V13 Z" fill="#fff"/></svg>
<div class="a" style="left:72px;top:228px;width:1796px;height:60px;background:#cbd2d9;border-radius:6px;"></div>
<svg class="a" style="left:87px;top:249px;" width="18" height="18" viewBox="0 0 18 18"><path d="M5.3 1 H12.7 L17 5.3 V12.7 L12.7 17 H5.3 L1 12.7 V5.3 Z" fill="#1c2b33" stroke="#1c2b33" stroke-width="1.5" stroke-linejoin="round"/><rect x="4" y="7.7" width="10" height="2.6" rx="0.5" fill="#cbd2d9"/></svg>
<div class="t " style="top:251.66px;font-size:13.4px;line-height:13.4px;color:#1c2b33;font-weight:bold;left:112.5px;">Atualização dos termos comerciais</div>
<div class="t " style="top:251.15px;font-size:14px;line-height:14px;color:#1c2b33;letter-spacing:0.075px;left:353px;">Nossos termos comerciais serão atualizados a partir de 23 de agosto de 2025. Os termos atualizados incluem alterações relevantes para anunciantes sujeitos a leis de transferência de dados no México, no Ca...</div>
<div class="a" style="left:1703px;top:240px;width:101px;height:35px;background:transparent;border:1px solid #b0b7be;border-radius:4px;background:rgba(255,255,255,0.08);"></div>
<div class="t " style="top:251.15px;font-size:14px;line-height:14px;color:#1c2b33;letter-spacing:0px;left:1753.5px;transform:translateX(-50%);-webkit-text-stroke:0.25px #1c2b33;">Saiba mais</div>
<div class="a" style="left:1812px;top:240px;width:40px;height:35px;background:transparent;border:1px solid #b0b7be;border-radius:4px;"></div>
<svg class="a" style="left:1825px;top:252px;" width="13" height="13" viewBox="0 0 13 13"><path d="M1 1 L12 12 M12 1 L1 12" stroke="#1c2b33" stroke-width="1.6"/></svg>
<div class="a" style="left:68px;top:297px;width:1804px;height:868px;background:rgba(236,240,244,0.82);border:1px solid rgba(218,222,228,0.9);border-radius:12px;"></div>
<div class="a" style="left:80px;top:305px;width:168px;height:42px;background:#f5f9fd;border:1px solid #0a78be;border-radius:5px;"></div>
<svg class="a" style="left:92px;top:317px;" width="20" height="17" viewBox="0 0 20 17"><path d="M1 2.5 C1 1.6 1.6 1 2.5 1 H7.5 L9.5 3.5 H17.5 C18.4 3.5 19 4.1 19 5 V14.5 C19 15.4 18.4 16 17.5 16 H2.5 C1.6 16 1 15.4 1 14.5 Z" fill="#0a78be"/><path d="M1 5 H19" stroke="#f5f9fd" stroke-width="0.8"/></svg>
<div class="t " style="top:319.74px;font-size:13.3px;line-height:13.3px;color:#0a78be;font-weight:bold;left:117px;">Todos os anúncios</div>
<div class="a" style="left:256px;top:305px;width:90px;height:42px;background:rgba(255,255,255,0.55);border:1px solid #c5cad0;border-radius:4px;"></div>
<svg class="a" style="left:268px;top:315px;" width="20" height="20" viewBox="0 0 20 20"><circle cx="10" cy="10" r="8.5" stroke="#1c2b33" stroke-width="1.5" fill="none"/><path d="M10 15 V6 M6.5 9.3 L10 5.8 L13.5 9.3" stroke="#1c2b33" stroke-width="1.6" fill="none"/><path d="M1.2 12.5 A1 1 0 0 0 3 13" stroke="#fff" stroke-width="0"/></svg>
<div class="t " style="top:318.15px;font-size:14px;line-height:14px;color:#1c2b33;left:293px;-webkit-text-stroke:0.2px #1c2b33;">Ações</div>
<div class="a" style="left:354px;top:305px;width:151px;height:42px;background:rgba(255,255,255,0.55);border:1px solid #c5cad0;border-radius:4px;"></div>
<svg class="a" style="left:366px;top:316px;" width="20" height="19" viewBox="0 0 20 19"><path d="M2 1.5 L18.5 9.5 L2 17.5 L4.8 9.5 Z M4.8 9.5 H11" stroke="#1c2b33" stroke-width="1.5" fill="none" stroke-linejoin="round"/></svg>
<div class="t " style="top:319.15px;font-size:14px;line-height:14px;color:#1c2b33;letter-spacing:0.15px;left:391px;-webkit-text-stroke:0.2px #1c2b33;">Anúncios ativos</div>
<div class="a" style="left:513px;top:305px;width:172px;height:42px;background:rgba(255,255,255,0.55);border:1px solid #c5cad0;border-radius:4px;"></div>
<svg class="a" style="left:524px;top:316px;" width="20" height="19" viewBox="0 0 20 19"><path d="M1.5 7.5 L10 1.5 L18.5 7.5 V17.5 H1.5 Z" stroke="#1c2b33" stroke-width="1.5" fill="none" stroke-linejoin="round"/><path d="M1.5 8 L10 13.5 L18.5 8 M1.5 17.5 L7.5 11.5 M18.5 17.5 L12.5 11.5" stroke="#1c2b33" stroke-width="1.3" fill="none"/></svg>
<div class="t " style="top:319.15px;font-size:14px;line-height:14px;color:#1c2b33;left:551px;-webkit-text-stroke:0.2px #1c2b33;">Tiveram veiculação</div>
<svg class="a" style="left:706px;top:319px;" width="14" height="14" viewBox="0 0 14 14"><path d="M7 1 V13 M1 7 H13" stroke="#1c2b33" stroke-width="1.8"/></svg>
<div class="t " style="top:319.15px;font-size:14px;line-height:14px;color:#1c2b33;left:729px;-webkit-text-stroke:0.3px #1c2b33;">Ver mais</div>
<div class="a" style="left:1641px;top:305px;width:175px;height:42px;background:#0a78be;border:1px solid #0a78be;border-radius:5px;"></div>
<div class="t " style="top:319.74px;font-size:13.3px;line-height:13.3px;color:#fff;font-weight:bold;left:1728.5px;transform:translateX(-50%);">Criar uma visualização</div>
<div class="a" style="left:1820px;top:305px;width:40px;height:42px;background:rgba(255,255,255,0.4);border:1px solid #c5cad0;border-radius:4px;"></div>
<svg class="a" style="left:1830px;top:316px;" width="20" height="20" viewBox="0 0 20 20"><path d="M2 6 H5.5 M9.5 6 H18 M2 14 H10.5 M14.5 14 H18" stroke="#1c2b33" stroke-width="1.4"/><circle cx="7.5" cy="6" r="2" stroke="#1c2b33" stroke-width="1.4" fill="none"/><circle cx="12.5" cy="14" r="2" stroke="#1c2b33" stroke-width="1.4" fill="none"/></svg>
<div class="a" style="left:80px;top:355px;width:1780px;height:36px;background:#fff;border-radius:6px;"></div>
<div class="t " style="top:365.90px;font-size:14.3px;line-height:14.3px;color:#6a7378;left:97px;">Pesquise para filtrar por: nome, identificação ou métrica</div>
<div class="a" style="left:80px;top:399px;width:271px;height:50px;background:#fff;border-radius:8px 8px 0 0;"></div>
<div class="a" style="left:360px;top:403px;width:271px;height:46px;background:#f6f7f9;border-radius:8px 8px 0 0;"></div>
<div class="a" style="left:639px;top:403px;width:272px;height:46px;background:#f6f7f9;border-radius:8px 8px 0 0;"></div>
<svg class="a" style="left:93px;top:411px;" width="22" height="20" viewBox="0 0 22 20"><path d="M1 2.5 C1 1.6 1.6 1 2.5 1 H8 L10 3.5 H19.5 C20.4 3.5 21 4.1 21 5 V17.5 C21 18.4 20.4 19 19.5 19 H2.5 C1.6 19 1 18.4 1 17.5 Z" fill="#0a78be"/><path d="M8 14.5 L11 8.5 L14 14.5 Z" fill="#fff" stroke="#fff" stroke-width="1.2" stroke-linejoin="round"/></svg>
<div class="t " style="top:413.96px;font-size:15.4px;line-height:15.4px;color:#0a78be;font-weight:bold;left:124px;">Campanhas</div>
<svg class="a" style="left:372px;top:414px;" width="20" height="19" viewBox="0 0 20 19"><rect x="1" y="1" width="7" height="7" rx="1.5" stroke="#1c2b33" stroke-width="1.6" fill="none"/><rect x="11.5" y="1" width="7" height="7" rx="1.5" stroke="#1c2b33" stroke-width="1.6" fill="none"/><rect x="1" y="11" width="7" height="7" rx="1.5" stroke="#1c2b33" stroke-width="1.6" fill="none"/><rect x="11.5" y="11" width="7" height="7" rx="1.5" stroke="#1c2b33" stroke-width="1.6" fill="none"/><circle cx="4.5" cy="14.5" r="1.3" fill="#1c2b33"/><circle cx="15" cy="14.5" r="1.3" fill="#1c2b33"/></svg>
<div class="t " style="top:416.22px;font-size:15.1px;line-height:15.1px;color:#1c2b33;font-weight:bold;left:400px;">Conjuntos de anúncios</div>
<svg class="a" style="left:651px;top:414px;" width="19" height="19" viewBox="0 0 19 19"><rect x="1" y="1" width="17" height="17" rx="2" stroke="#1c2b33" stroke-width="1.5" fill="none"/><path d="M1 5.5 H18" stroke="#1c2b33" stroke-width="1.3"/><circle cx="4" cy="3.3" r="0.9" fill="#1c2b33"/></svg>
<div class="t " style="top:416.22px;font-size:15.1px;line-height:15.1px;color:#1c2b33;font-weight:bold;left:679px;">Anúncios</div>
<div class="a" style="left:1482px;top:399px;width:378px;height:36px;background:rgba(255,255,255,0.5);border:1px solid #c5cad0;border-radius:4px;"></div>
<svg class="a" style="left:1494px;top:409px;" width="17" height="17" viewBox="0 0 17 17"><rect x="1" y="1" width="15" height="15" rx="2" stroke="#1c2b33" stroke-width="1.5" fill="none"/><path d="M1 5 H16 M1 8.5 H16 M1 12 H16 M5.5 5 V16 M9.5 5 V16 M13 5 V16" stroke="#1c2b33" stroke-width="1.2"/><path d="M1 3 H16" stroke="#1c2b33" stroke-width="2"/></svg>
<div class="t " style="top:410.98px;font-size:14.2px;line-height:14.2px;color:#1c2b33;left:1518px;">Máximo: 30 de dez de 2022 a 30 de jan de 2026</div>
<svg class="a" style="left:1834.5px;top:414.0px;" width="11" height="6" viewBox="0 0 11 6"><path d="M0.5 0.5 H10.5 L5.5 6 Z" fill="#1c2b33" stroke="#1c2b33" stroke-width="1" stroke-linejoin="round"/></svg>
<div class="a" style="left:72px;top:443px;width:1796px;height:715px;background:#fff;border-radius:0 0 10px 10px;"></div>
<div class="a" style="left:80px;top:451px;width:83px;height:36px;background:#0b6c4b;border:1px solid #0b6c4b;border-radius:5px;"></div>
<svg class="a" style="left:94px;top:463px;" width="12" height="12" viewBox="0 0 12 12"><path d="M6 0.5 V11.5 M0.5 6 H11.5" stroke="#fff" stroke-width="1.9"/></svg>
<div class="t " style="top:462.15px;font-size:14px;line-height:14px;color:#fff;letter-spacing:0.2px;left:116.5px;-webkit-text-stroke:0.2px #fff;">Criar</div>
<div class="a" style="left:171px;top:451px;width:105px;height:36px;background:transparent;border:1px solid #cfd3d8;border-radius:4px;"></div>
<svg class="a" style="left:183px;top:461px;" width="16" height="16" viewBox="0 0 16 16"><path d="M3.5 3.5 C2 3.5 1.5 4 1.5 5.5 V13.5 C1.5 15 2 15.5 3.5 15.5" stroke="#8a9196" stroke-width="1.5" fill="none"/><path d="M5 1 H10.5 L15 5.5 V12.5 C15 13.4 14.4 14 13.5 14 H6.5 C5.6 14 5 13.4 5 12.5 Z" fill="#8a9196"/><path d="M10.5 1 V5.5 H15" fill="#fff" stroke="#fff" stroke-width="0.8"/></svg>
<div class="t " style="top:462.15px;font-size:14px;line-height:14px;color:#8a9196;letter-spacing:0.15px;left:208px;-webkit-text-stroke:0.2px #8a9196;">Duplicar</div>
<div class="a" style="left:285px;top:451px;width:91px;height:36px;background:transparent;border:1px solid #cfd3d8;border-radius:4px;"></div>
<svg class="a" style="left:297px;top:461px;" width="16" height="16" viewBox="0 0 16 16"><path d="M1.5 14.5 L2.3 10.8 L11 2 L14 5 L5.2 13.7 Z" fill="#8a9196"/><path d="M12 1 L15 4" stroke="#8a9196" stroke-width="2"/></svg>
<div class="t " style="top:462.15px;font-size:14px;line-height:14px;color:#8a9196;letter-spacing:0.2px;left:321.5px;-webkit-text-stroke:0.2px #8a9196;">Editar</div>
<div class="a" style="left:385px;top:451px;width:1px;height:36px;background:#d6dade;"></div>
<div class="a" style="left:394px;top:451px;width:116px;height:36px;background:transparent;border:1px solid #b8bec4;border-radius:4px;"></div>
<svg class="a" style="left:406px;top:460px;" width="16" height="17" viewBox="0 0 16 17"><path d="M5 1 H11 M6 1 V6.5 L1.5 14 C1 15 1.6 16 2.7 16 H13.3 C14.4 16 15 15 14.5 14 L10 6.5 V1" stroke="#1c2b33" stroke-width="1.5" fill="none"/><path d="M3.3 11 H12.7 L14.2 14.5 C14.5 15.2 14 15.6 13.3 15.6 H2.7 C2 15.6 1.5 15.2 1.8 14.5 Z" fill="#1c2b33"/></svg>
<div class="t " style="top:462.15px;font-size:14px;line-height:14px;color:#1c2b33;letter-spacing:0.2px;left:430.5px;-webkit-text-stroke:0.2px #1c2b33;">Teste A/B</div>
<div class="t " style="top:462.15px;font-size:14px;line-height:14px;color:#1c2b33;letter-spacing:0.2px;left:534px;-webkit-text-stroke:0.2px #1c2b33;">Mais</div>
<svg class="a" style="left:575.5px;top:466.0px;" width="11" height="6" viewBox="0 0 11 6"><path d="M0.5 0.5 H10.5 L5.5 6 Z" fill="#1c2b33" stroke="#1c2b33" stroke-width="1" stroke-linejoin="round"/></svg>
<div class="a" style="left:1264px;top:451px;width:216px;height:36px;background:transparent;border:1px solid #b8bec4;border-radius:4px;"></div>
<svg class="a" style="left:1276px;top:463px;" width="16" height="13" viewBox="0 0 16 13"><rect x="0" y="0" width="3.6" height="13" fill="#1c2b33"/><rect x="6" y="0" width="3.6" height="13" fill="#1c2b33"/><rect x="12" y="0" width="3.6" height="13" fill="#1c2b33"/></svg>
<div class="t " style="top:462.15px;font-size:14px;line-height:14px;color:#1c2b33;letter-spacing:0.05px;left:1300px;-webkit-text-stroke:0.2px #1c2b33;">Colunas: Desempenho</div>
<svg class="a" style="left:1454.5px;top:466.0px;" width="11" height="6" viewBox="0 0 11 6"><path d="M0.5 0.5 H10.5 L5.5 6 Z" fill="#1c2b33" stroke="#1c2b33" stroke-width="1" stroke-linejoin="round"/></svg>
<div class="a" style="left:1488px;top:451px;width:165px;height:36px;background:transparent;border:1px solid #b8bec4;border-radius:4px;"></div>
<svg class="a" style="left:1501px;top:461px;" width="15" height="15" viewBox="0 0 15 15"><rect x="0" y="0" width="14" height="3" fill="#1c2b33"/><rect x="3" y="4.5" width="11" height="3" fill="#1c2b33"/><rect x="5" y="9" width="9" height="3" fill="#1c2b33"/><rect x="5" y="12" width="9" height="3" fill="#1c2b33"/></svg>
<div class="t " style="top:462.15px;font-size:14px;line-height:14px;color:#1c2b33;letter-spacing:0.2px;left:1525px;-webkit-text-stroke:0.2px #1c2b33;">Detalhamento</div>
<svg class="a" style="left:1627.5px;top:466.0px;" width="11" height="6" viewBox="0 0 11 6"><path d="M0.5 0.5 H10.5 L5.5 6 Z" fill="#1c2b33" stroke="#1c2b33" stroke-width="1" stroke-linejoin="round"/></svg>
<div class="a" style="left:1661px;top:451px;width:64px;height:36px;background:transparent;border:1px solid #b8bec4;border-radius:4px;"></div>
<svg class="a" style="left:1673px;top:460px;" width="16" height="17" viewBox="0 0 16 17"><path d="M2 1.5 H11.5 V14.5 H2 Z" fill="#1c2b33"/><path d="M12.5 4 H14.5 V16 H4 V15" stroke="#1c2b33" stroke-width="1.5" fill="none"/><path d="M4 4.5 H9.5 M4 7.5 H9.5" stroke="#fff" stroke-width="1.2"/></svg>
<svg class="a" style="left:1699.5px;top:466.0px;" width="11" height="6" viewBox="0 0 11 6"><path d="M0.5 0.5 H10.5 L5.5 6 Z" fill="#1c2b33" stroke="#1c2b33" stroke-width="1" stroke-linejoin="round"/></svg>
<div class="a" style="left:1733px;top:451px;width:79px;height:36px;background:transparent;border:1px solid #b8bec4;border-radius:4px;"></div>
<div class="a" style="left:1772px;top:451px;width:1px;height:36px;background:#b8bec4;"></div>
<svg class="a" style="left:1745px;top:461px;" width="16" height="16" viewBox="0 0 16 16"><path d="M7 2 H2 V14 H14 V9" stroke="#1c2b33" stroke-width="1.6" fill="none"/><path d="M9 1.5 H14.5 V7 M14.5 1.5 L7.5 8.5" stroke="#1c2b33" stroke-width="1.6" fill="none"/></svg>
<svg class="a" style="left:1786.5px;top:466.0px;" width="11" height="6" viewBox="0 0 11 6"><path d="M0.5 0.5 H10.5 L5.5 6 Z" fill="#1c2b33" stroke="#1c2b33" stroke-width="1" stroke-linejoin="round"/></svg>
<div class="a" style="left:1820px;top:451px;width:40px;height:36px;background:transparent;border:1px solid #b8bec4;border-radius:4px;"></div>
<svg class="a" style="left:1832px;top:461px;" width="16" height="16" viewBox="0 0 16 16"><rect x="1" y="1" width="14" height="14" rx="1" stroke="#1c2b33" stroke-width="1.5" fill="none"/><path d="M3.5 11.5 L6.5 8 L9 10 L12.5 5.5 M10 5 H13 V8" stroke="#1c2b33" stroke-width="1.4" fill="none"/></svg>
<div class="a" style="left:72px;top:495px;width:1796px;height:1px;background:#dadde1;"></div>
<div class="a" style="left:72px;top:543px;width:1796px;height:1px;background:#d3d7db;"></div>
<div class="a" style="left:120px;top:496px;width:1px;height:47px;background:#dfe2e5;"></div>
<div class="a" style="left:214px;top:496px;width:1px;height:47px;background:#dfe2e5;"></div>
<div class="a" style="left:569px;top:496px;width:1px;height:47px;background:#dfe2e5;"></div>
<div class="a" style="left:728px;top:496px;width:1px;height:47px;background:#dfe2e5;"></div>
<div class="a" style="left:928px;top:496px;width:1px;height:47px;background:#dfe2e5;"></div>
<div class="a" style="left:1074px;top:496px;width:1px;height:47px;background:#dfe2e5;"></div>
<div class="a" style="left:1220px;top:496px;width:1px;height:47px;background:#dfe2e5;"></div>
<div class="a" style="left:1354px;top:496px;width:1px;height:47px;background:#dfe2e5;"></div>
<div class="a" style="left:1503px;top:496px;width:1px;height:47px;background:#dfe2e5;"></div>
<div class="a" style="left:1649px;top:496px;width:1px;height:47px;background:#dfe2e5;"></div>
<div class="a" style="left:1795px;top:496px;width:1px;height:47px;background:#dfe2e5;"></div>
<div class="a" style="left:84px;top:508px;width:24px;height:24px;background:#fff;border:1px solid #bfc4c9;border-radius:4px;"></div>
<div class="t " style="top:513.74px;font-size:13.3px;line-height:13.3px;color:#1c2b33;font-weight:bold;left:131.5px;">De...</div>
<svg class="a" style="left:175px;top:513.5px;" width="13" height="12" viewBox="0 0 13 12"><path d="M3.5 11.5 V1.2 M0.7 4 L3.5 1.1 L6.3 4" stroke="#1c2b33" stroke-width="1.5" fill="none"/><path d="M9.5 0.5 V10.8 M6.7 8 L9.5 10.9 L12.3 8" stroke="#1c2b33" stroke-width="1.5" fill="none"/></svg>
<div class="t " style="top:513.74px;font-size:13.3px;line-height:13.3px;color:#1c2b33;font-weight:bold;left:225px;">campanha</div>
<svg class="a" style="left:298px;top:513.5px;" width="13" height="12" viewBox="0 0 13 12"><path d="M3.5 11.5 V1.2 M0.7 4 L3.5 1.1 L6.3 4" stroke="#1c2b33" stroke-width="1.5" fill="none"/><path d="M9.5 0.5 V10.8 M6.7 8 L9.5 10.9 L12.3 8" stroke="#1c2b33" stroke-width="1.5" fill="none"/></svg>
<svg class="a" style="left:551.5px;top:517.25px;" width="9" height="5.5" viewBox="0 0 9 5.5"><path d="M0.5 0.5 H8.5 L4.5 5.5 Z" fill="#1c2b33" stroke="#1c2b33" stroke-width="1" stroke-linejoin="round"/></svg>
<div class="t " style="top:513.74px;font-size:13.3px;line-height:13.3px;color:#1c2b33;font-weight:bold;left:580px;">Veiculação</div>
<svg class="a" style="left:655px;top:513.5px;" width="13" height="12" viewBox="0 0 13 12"><path d="M3.5 11.5 V1.2 M0.7 4 L3.5 1.1 L6.3 4" stroke="#1c2b33" stroke-width="1.5" fill="none"/><path d="M9.5 0.5 V10.8 M6.7 8 L9.5 10.9 L12.3 8" stroke="#1c2b33" stroke-width="1.5" fill="none"/></svg>
<svg class="a" style="left:711.5px;top:517.25px;" width="9" height="5.5" viewBox="0 0 9 5.5"><path d="M0.5 0.5 H8.5 L4.5 5.5 Z" fill="#1c2b33" stroke="#1c2b33" stroke-width="1" stroke-linejoin="round"/></svg>
<div class="t " style="top:513.74px;font-size:13.3px;line-height:13.3px;color:#1c2b33;font-weight:bold;left:739.5px;">Ações</div>
<svg class="a" style="left:911.5px;top:517.25px;" width="9" height="5.5" viewBox="0 0 9 5.5"><path d="M0.5 0.5 H8.5 L4.5 5.5 Z" fill="#1c2b33" stroke="#1c2b33" stroke-width="1" stroke-linejoin="round"/></svg>
<div class="t " style="top:513.74px;font-size:13.3px;line-height:13.3px;color:#0a78be;font-weight:bold;left:947.5px;">Resultados</div>
<svg class="a" style="left:1025px;top:512px;" width="12" height="14" viewBox="0 0 12 14"><path d="M6 1 V12.5 M1.5 8 L6 12.5 L10.5 8" stroke="#1c2b33" stroke-width="1.8" fill="none"/></svg>
<svg class="a" style="left:1057.5px;top:517.25px;" width="9" height="5.5" viewBox="0 0 9 5.5"><path d="M0.5 0.5 H8.5 L4.5 5.5 Z" fill="#1c2b33" stroke="#1c2b33" stroke-width="1" stroke-linejoin="round"/></svg>
<div class="t " style="top:504.74px;font-size:13.3px;line-height:13.3px;color:#1c2b33;font-weight:bold;left:1085px;">Custo por</div>
<div class="t " style="top:523.74px;font-size:13.3px;line-height:13.3px;color:#1c2b33;font-weight:bold;left:1085px;">resultado</div>
<svg class="a" style="left:1181px;top:513.5px;" width="13" height="12" viewBox="0 0 13 12"><path d="M3.5 11.5 V1.2 M0.7 4 L3.5 1.1 L6.3 4" stroke="#1c2b33" stroke-width="1.5" fill="none"/><path d="M9.5 0.5 V10.8 M6.7 8 L9.5 10.9 L12.3 8" stroke="#1c2b33" stroke-width="1.5" fill="none"/></svg>
<svg class="a" style="left:1203.5px;top:517.25px;" width="9" height="5.5" viewBox="0 0 9 5.5"><path d="M0.5 0.5 H8.5 L4.5 5.5 Z" fill="#1c2b33" stroke="#1c2b33" stroke-width="1" stroke-linejoin="round"/></svg>
<div class="t " style="top:513.74px;font-size:13.3px;line-height:13.3px;color:#1c2b33;font-weight:bold;left:1231px;">Orçamento</div>
<svg class="a" style="left:1311px;top:513.5px;" width="13" height="12" viewBox="0 0 13 12"><path d="M3.5 11.5 V1.2 M0.7 4 L3.5 1.1 L6.3 4" stroke="#1c2b33" stroke-width="1.5" fill="none"/><path d="M9.5 0.5 V10.8 M6.7 8 L9.5 10.9 L12.3 8" stroke="#1c2b33" stroke-width="1.5" fill="none"/></svg>
<svg class="a" style="left:1337.5px;top:517.25px;" width="9" height="5.5" viewBox="0 0 9 5.5"><path d="M0.5 0.5 H8.5 L4.5 5.5 Z" fill="#1c2b33" stroke="#1c2b33" stroke-width="1" stroke-linejoin="round"/></svg>
<div class="t " style="top:513.74px;font-size:13.3px;line-height:13.3px;color:#1c2b33;font-weight:bold;left:1365.5px;">Valor usado</div>
<svg class="a" style="left:1447px;top:513.5px;" width="13" height="12" viewBox="0 0 13 12"><path d="M3.5 11.5 V1.2 M0.7 4 L3.5 1.1 L6.3 4" stroke="#1c2b33" stroke-width="1.5" fill="none"/><path d="M9.5 0.5 V10.8 M6.7 8 L9.5 10.9 L12.3 8" stroke="#1c2b33" stroke-width="1.5" fill="none"/></svg>
<svg class="a" style="left:1486.5px;top:517.25px;" width="9" height="5.5" viewBox="0 0 9 5.5"><path d="M0.5 0.5 H8.5 L4.5 5.5 Z" fill="#1c2b33" stroke="#1c2b33" stroke-width="1" stroke-linejoin="round"/></svg>
<div class="t " style="top:513.74px;font-size:13.3px;line-height:13.3px;color:#1c2b33;font-weight:bold;left:1514.5px;">Impressões</div>
<svg class="a" style="left:1595px;top:513.5px;" width="13" height="12" viewBox="0 0 13 12"><path d="M3.5 11.5 V1.2 M0.7 4 L3.5 1.1 L6.3 4" stroke="#1c2b33" stroke-width="1.5" fill="none"/><path d="M9.5 0.5 V10.8 M6.7 8 L9.5 10.9 L12.3 8" stroke="#1c2b33" stroke-width="1.5" fill="none"/></svg>
<svg class="a" style="left:1632.5px;top:517.25px;" width="9" height="5.5" viewBox="0 0 9 5.5"><path d="M0.5 0.5 H8.5 L4.5 5.5 Z" fill="#1c2b33" stroke="#1c2b33" stroke-width="1" stroke-linejoin="round"/></svg>
<div class="t " style="top:513.74px;font-size:13.3px;line-height:13.3px;color:#1c2b33;font-weight:bold;left:1661px;">Alcance</div>
<svg class="a" style="left:1717px;top:513.5px;" width="13" height="12" viewBox="0 0 13 12"><path d="M3.5 11.5 V1.2 M0.7 4 L3.5 1.1 L6.3 4" stroke="#1c2b33" stroke-width="1.5" fill="none"/><path d="M9.5 0.5 V10.8 M6.7 8 L9.5 10.9 L12.3 8" stroke="#1c2b33" stroke-width="1.5" fill="none"/></svg>
<svg class="a" style="left:1778.5px;top:517.25px;" width="9" height="5.5" viewBox="0 0 9 5.5"><path d="M0.5 0.5 H8.5 L4.5 5.5 Z" fill="#1c2b33" stroke="#1c2b33" stroke-width="1" stroke-linejoin="round"/></svg>
<div class="t " style="top:513.74px;font-size:13.3px;line-height:13.3px;color:#1c2b33;font-weight:bold;left:1806px;">Término</div>
<div class="a" style="left:1796px;top:505px;width:72px;height:30px;overflow:hidden;"><svg style="position:absolute;left:66px;top:8.5px" width="13" height="12" viewBox="0 0 13 12"><path d="M3.5 11.5 V1.2 M0.7 4 L3.5 1.1 L6.3 4" stroke="#1c2b33" stroke-width="1.5" fill="none"/><path d="M9.5 0.5 V10.8 M6.7 8 L9.5 10.9 L12.3 8" stroke="#1c2b33" stroke-width="1.5" fill="none"/></svg></div>
<div class="a" style="left:72px;top:544px;width:1796px;height:46px;background:#ffffff;"></div>
<div class="a" style="left:85px;top:555px;width:24px;height:24px;background:#fff;border:1px solid #c9cdd2;border-radius:4px;"></div>
<div class="a" style="left:149px;top:556px;width:38px;height:22px;background:#fff;border:1px solid #d5d9dd;border-radius:11px;"></div>
<div class="a" style="left:152px;top:559px;width:17px;height:17px;background:#1c2b33;border-radius:50%;"></div>
<div class="t " style="top:551.15px;font-size:14px;line-height:14px;color:#1d5fae;letter-spacing:0.065px;left:223px;">RECONHECIMENTO CAMPANHA</div>
<div class="a" style="left:577px;top:552px;width:12px;height:12px;background:#c9ced3;border-radius:50%;"></div>
<div class="t " style="top:551.15px;font-size:14px;line-height:14px;color:#1c2b33;letter-spacing:0.22px;left:597px;">Desativado</div>
<div class="a" style="left:737px;top:559px;width:13px;height:1.3px;background:#1c2b33;"></div>
<div class="t " style="top:551.15px;font-size:14px;line-height:14px;color:#1c2b33;right:853px;">1.443</div>
<div class="t " style="top:571.84px;font-size:12px;line-height:12px;color:#67737a;right:853px;">Alcance</div>
<div class="t " style="top:551.15px;font-size:14px;line-height:14px;color:#1c2b33;right:707px;">R$ 1,33</div>
<div class="t " style="top:571.84px;font-size:12px;line-height:12px;color:#67737a;left:1083.5px;">Por 1.000 pessoas alc...</div>
<div class="t " style="top:551.15px;font-size:14px;line-height:14px;color:#1c2b33;left:1229.5px;">Usando o orçam...</div>
<div class="t " style="top:551.15px;font-size:14px;line-height:14px;color:#1c2b33;right:424.5px;">R$ 1,92</div>
<div class="t " style="top:551.15px;font-size:14px;line-height:14px;color:#1c2b33;right:278px;">1.443</div>
<div class="t " style="top:551.15px;font-size:14px;line-height:14px;color:#1c2b33;right:132.5px;">1.443</div>
<div class="t" style="left:1804px;top:551.15px;font-size:14px;line-height:14px;color:#1c2b33;width:64px;overflow:hidden;">Campanha</div>
<div class="a" style="left:72px;top:590px;width:1796px;height:46px;background:#f4f5f7;"></div>
<div class="a" style="left:85px;top:601px;width:24px;height:24px;background:#fff;border:1px solid #c9cdd2;border-radius:4px;"></div>
<div class="a" style="left:149px;top:602px;width:38px;height:22px;background:#e4ebf2;border:1px solid #d5dce3;border-radius:11px;"></div>
<div class="a" style="left:168px;top:605px;width:17px;height:17px;background:#0a78be;border-radius:50%;"></div>
<div class="t " style="top:597.15px;font-size:14px;line-height:14px;color:#1d5fae;letter-spacing:0.134px;left:223px;">29/07/2025 - VENDAS - ESQUADRIA DE ALUMÍN...</div>
<div class="a" style="left:577px;top:598px;width:12px;height:12px;background:#c9ced3;border-radius:50%;"></div>
<div class="t " style="top:597.15px;font-size:14px;line-height:14px;color:#1c2b33;letter-spacing:0.22px;left:597px;">Erro no pagamento</div>
<div class="a" style="left:737px;top:605px;width:13px;height:1.3px;background:#1c2b33;"></div>
<div class="t" style="right:857px;top:597.15px;font-size:14px;line-height:14px;color:#1c2b33;text-decoration:underline dotted #1c2b33;text-decoration-thickness:1px;text-underline-offset:2px;">129</div>
<div class="t " style="top:617.84px;font-size:12px;line-height:12px;color:#67737a;left:937.5px;">Visualizações de cont...</div>
<div class="t" style="right:711px;top:597.15px;font-size:14px;line-height:14px;color:#1c2b33;text-decoration:underline dotted #1c2b33;text-decoration-thickness:1px;text-underline-offset:2px;">R$ 0,81</div>
<div class="t " style="top:617.84px;font-size:12px;line-height:12px;color:#67737a;right:711px;">Por Ver conteúdo</div>
<div class="t " style="top:597.15px;font-size:14px;line-height:14px;color:#1c2b33;left:1229.5px;">Usando o orçam...</div>
<div class="t " style="top:597.15px;font-size:14px;line-height:14px;color:#1c2b33;right:424.5px;">R$ 104,28</div>
<div class="t " style="top:597.15px;font-size:14px;line-height:14px;color:#1c2b33;right:278px;">9.343</div>
<div class="t " style="top:597.15px;font-size:14px;line-height:14px;color:#1c2b33;right:132.5px;">7.762</div>
<div class="t" style="left:1804px;top:597.15px;font-size:14px;line-height:14px;color:#1c2b33;width:64px;overflow:hidden;">Campanha</div>
<div class="a" style="left:72px;top:636px;width:1796px;height:46px;background:#ffffff;"></div>
<div class="a" style="left:85px;top:647px;width:24px;height:24px;background:#fff;border:1px solid #c9cdd2;border-radius:4px;"></div>
<div class="a" style="left:149px;top:648px;width:38px;height:22px;background:#fff;border:1px solid #d5d9dd;border-radius:11px;"></div>
<div class="a" style="left:152px;top:651px;width:17px;height:17px;background:#1c2b33;border-radius:50%;"></div>
<div class="t " style="top:643.15px;font-size:14px;line-height:14px;color:#1d5fae;letter-spacing:-0.1px;left:223px;">CAMP ENG VIDROS</div>
<div class="a" style="left:577px;top:644px;width:12px;height:12px;background:#c9ced3;border-radius:50%;"></div>
<div class="t " style="top:643.15px;font-size:14px;line-height:14px;color:#1c2b33;letter-spacing:0.22px;left:597px;">Desativado</div>
<div class="a" style="left:737px;top:651px;width:13px;height:1.3px;background:#1c2b33;"></div>
<div class="t" style="right:857px;top:643.15px;font-size:14px;line-height:14px;color:#1c2b33;text-decoration:underline dotted #1c2b33;text-decoration-thickness:1px;text-underline-offset:2px;">83</div>
<div class="t " style="top:663.84px;font-size:12px;line-height:12px;color:#67737a;left:937.5px;">Conversas por mensa...</div>
<div class="t" style="right:711px;top:643.15px;font-size:14px;line-height:14px;color:#1c2b33;text-decoration:underline dotted #1c2b33;text-decoration-thickness:1px;text-underline-offset:2px;">R$ 3,95</div>
<div class="t " style="top:663.84px;font-size:12px;line-height:12px;color:#67737a;left:1083.5px;">Por conversa por me...</div>
<div class="t " style="top:643.15px;font-size:14px;line-height:14px;color:#1c2b33;right:573.5px;">R$ 15,00</div>
<div class="t " style="top:663.84px;font-size:12px;line-height:12px;color:#67737a;right:573.5px;">Média diária</div>
<div class="t " style="top:643.15px;font-size:14px;line-height:14px;color:#1c2b33;right:424.5px;">R$ 328,07</div>
<div class="t " style="top:643.15px;font-size:14px;line-height:14px;color:#1c2b33;right:278px;">15.220</div>
<div class="t " style="top:643.15px;font-size:14px;line-height:14px;color:#1c2b33;right:132.5px;">9.504</div>
<div class="t" style="left:1804px;top:643.15px;font-size:14px;line-height:14px;color:#1c2b33;width:64px;overflow:hidden;">Campanha</div>
<div class="a" style="left:72px;top:682px;width:1796px;height:46px;background:#f4f5f7;"></div>
<div class="a" style="left:85px;top:693px;width:24px;height:24px;background:#fff;border:1px solid #c9cdd2;border-radius:4px;"></div>
<div class="a" style="left:149px;top:694px;width:38px;height:22px;background:#fff;border:1px solid #d5d9dd;border-radius:11px;"></div>
<div class="a" style="left:152px;top:697px;width:17px;height:17px;background:#1c2b33;border-radius:50%;"></div>
<div class="t " style="top:689.15px;font-size:14px;line-height:14px;color:#1d5fae;letter-spacing:0.19px;left:223px;">05/03/25 - TRF - ESQUADRIAS DE ALUMINIO</div>
<div class="a" style="left:577px;top:690px;width:12px;height:12px;background:#c9ced3;border-radius:50%;"></div>
<div class="t " style="top:689.15px;font-size:14px;line-height:14px;color:#1c2b33;letter-spacing:0.22px;left:597px;">Desativado</div>
<div class="a" style="left:737px;top:697px;width:13px;height:1.3px;background:#1c2b33;"></div>
<div class="t " style="top:689.15px;font-size:14px;line-height:14px;color:#1c2b33;right:853px;">33</div>
<div class="t " style="top:709.84px;font-size:12px;line-height:12px;color:#67737a;right:853px;">Cliques no link</div>
<div class="t " style="top:689.15px;font-size:14px;line-height:14px;color:#1c2b33;right:707px;">R$ 1,53</div>
<div class="t " style="top:709.84px;font-size:12px;line-height:12px;color:#67737a;right:707px;">Por clique no link</div>
<div class="t " style="top:689.15px;font-size:14px;line-height:14px;color:#1c2b33;left:1229.5px;">Usando o orçam...</div>
<div class="t " style="top:689.15px;font-size:14px;line-height:14px;color:#1c2b33;right:424.5px;">R$ 50,53</div>
<div class="t " style="top:689.15px;font-size:14px;line-height:14px;color:#1c2b33;right:278px;">2.546</div>
<div class="t " style="top:689.15px;font-size:14px;line-height:14px;color:#1c2b33;right:132.5px;">1.855</div>
<div class="t" style="left:1804px;top:689.15px;font-size:14px;line-height:14px;color:#1c2b33;width:64px;overflow:hidden;">Campanha</div>
<div class="a" style="left:72px;top:728px;width:1796px;height:46px;background:#ffffff;"></div>
<div class="a" style="left:85px;top:739px;width:24px;height:24px;background:#fff;border:1px solid #c9cdd2;border-radius:4px;"></div>
<div class="a" style="left:149px;top:740px;width:38px;height:22px;background:#fff;border:1px solid #d5d9dd;border-radius:11px;"></div>
<div class="a" style="left:152px;top:743px;width:17px;height:17px;background:#1c2b33;border-radius:50%;"></div>
<div class="t " style="top:735.15px;font-size:14px;line-height:14px;color:#1d5fae;letter-spacing:-0.032px;left:223px;">13/07 - ENG - PUBLICAÇÕES</div>
<div class="a" style="left:577px;top:736px;width:12px;height:12px;background:#c9ced3;border-radius:50%;"></div>
<div class="t " style="top:735.15px;font-size:14px;line-height:14px;color:#1c2b33;letter-spacing:0.22px;left:597px;">Desativado</div>
<div class="a" style="left:737px;top:743px;width:13px;height:1.3px;background:#1c2b33;"></div>
<div class="t" style="right:857px;top:735.15px;font-size:14px;line-height:14px;color:#1c2b33;text-decoration:underline dotted #1c2b33;text-decoration-thickness:1px;text-underline-offset:2px;">10</div>
<div class="t " style="top:755.84px;font-size:12px;line-height:12px;color:#67737a;left:937.5px;">Conversas por mensa...</div>
<div class="t" style="right:711px;top:735.15px;font-size:14px;line-height:14px;color:#1c2b33;text-decoration:underline dotted #1c2b33;text-decoration-thickness:1px;text-underline-offset:2px;">R$ 5,79</div>
<div class="t " style="top:755.84px;font-size:12px;line-height:12px;color:#67737a;left:1083.5px;">Por conversa por me...</div>
<div class="t " style="top:735.15px;font-size:14px;line-height:14px;color:#1c2b33;right:573.5px;">R$ 20,00</div>
<div class="t " style="top:755.84px;font-size:12px;line-height:12px;color:#67737a;right:573.5px;">Média diária</div>
<div class="t " style="top:735.15px;font-size:14px;line-height:14px;color:#1c2b33;right:424.5px;">R$ 57,90</div>
<div class="t " style="top:735.15px;font-size:14px;line-height:14px;color:#1c2b33;right:278px;">2.908</div>
<div class="t " style="top:735.15px;font-size:14px;line-height:14px;color:#1c2b33;right:132.5px;">2.322</div>
<div class="t" style="left:1804px;top:735.15px;font-size:14px;line-height:14px;color:#1c2b33;width:64px;overflow:hidden;">Campanha</div>
<div class="a" style="left:72px;top:774px;width:1796px;height:46px;background:#f4f5f7;"></div>
<div class="a" style="left:85px;top:785px;width:24px;height:24px;background:#fff;border:1px solid #c9cdd2;border-radius:4px;"></div>
<div class="a" style="left:149px;top:786px;width:38px;height:22px;background:#fff;border:1px solid #d5d9dd;border-radius:11px;"></div>
<div class="a" style="left:152px;top:789px;width:17px;height:17px;background:#1c2b33;border-radius:50%;"></div>
<div class="t " style="top:781.15px;font-size:14px;line-height:14px;color:#1d5fae;letter-spacing:-0.148px;left:223px;">CAMP ENG ESQUADRIAS TESTE</div>
<div class="a" style="left:577px;top:782px;width:12px;height:12px;background:#c9ced3;border-radius:50%;"></div>
<div class="t " style="top:781.15px;font-size:14px;line-height:14px;color:#1c2b33;letter-spacing:0.22px;left:597px;">Desativado</div>
<div class="a" style="left:737px;top:789px;width:13px;height:1.3px;background:#1c2b33;"></div>
<div class="t" style="right:857px;top:781.15px;font-size:14px;line-height:14px;color:#1c2b33;text-decoration:underline dotted #1c2b33;text-decoration-thickness:1px;text-underline-offset:2px;">7</div>
<div class="t " style="top:801.84px;font-size:12px;line-height:12px;color:#67737a;left:937.5px;">Conversas por mensa...</div>
<div class="t" style="right:711px;top:781.15px;font-size:14px;line-height:14px;color:#1c2b33;text-decoration:underline dotted #1c2b33;text-decoration-thickness:1px;text-underline-offset:2px;">R$ 10,89</div>
<div class="t " style="top:801.84px;font-size:12px;line-height:12px;color:#67737a;left:1083.5px;">Por conversa por me...</div>
<div class="t " style="top:781.15px;font-size:14px;line-height:14px;color:#1c2b33;right:573.5px;">R$ 15,00</div>
<div class="t " style="top:801.84px;font-size:12px;line-height:12px;color:#67737a;right:573.5px;">Média diária</div>
<div class="t " style="top:781.15px;font-size:14px;line-height:14px;color:#1c2b33;right:424.5px;">R$ 76,24</div>
<div class="t " style="top:781.15px;font-size:14px;line-height:14px;color:#1c2b33;right:278px;">3.552</div>
<div class="t " style="top:781.15px;font-size:14px;line-height:14px;color:#1c2b33;right:132.5px;">3.007</div>
<div class="t" style="left:1804px;top:781.15px;font-size:14px;line-height:14px;color:#1c2b33;width:64px;overflow:hidden;">Campanha</div>
<div class="a" style="left:72px;top:820px;width:1796px;height:46px;background:#ffffff;"></div>
<div class="a" style="left:85px;top:831px;width:24px;height:24px;background:#fff;border:1px solid #c9cdd2;border-radius:4px;"></div>
<div class="a" style="left:149px;top:832px;width:38px;height:22px;background:#fff;border:1px solid #d5d9dd;border-radius:11px;"></div>
<div class="a" style="left:152px;top:835px;width:17px;height:17px;background:#1c2b33;border-radius:50%;"></div>
<div class="t " style="top:827.15px;font-size:14px;line-height:14px;color:#1d5fae;letter-spacing:0.325px;left:223px;">04/08/2025 - ENGAJAMENTO PUBLICAÇÕES</div>
<div class="a" style="left:577px;top:828px;width:12px;height:12px;background:#c9ced3;border-radius:50%;"></div>
<div class="t " style="top:827.15px;font-size:14px;line-height:14px;color:#1c2b33;letter-spacing:0.22px;left:597px;">Desativado</div>
<div class="a" style="left:737px;top:835px;width:13px;height:1.3px;background:#1c2b33;"></div>
<div class="a" style="left:1054px;top:835px;width:13px;height:1.3px;background:#1c2b33;"></div>
<div class="t " style="top:847.84px;font-size:12px;line-height:12px;color:#67737a;left:937.5px;">Conversa por mensag...</div>
<div class="a" style="left:1200px;top:835px;width:13px;height:1.3px;background:#1c2b33;"></div>
<div class="t " style="top:847.84px;font-size:12px;line-height:12px;color:#67737a;left:1083.5px;">Por conversa por men...</div>
<div class="t " style="top:827.15px;font-size:14px;line-height:14px;color:#1c2b33;right:573.5px;">R$ 20,00</div>
<div class="t " style="top:847.84px;font-size:12px;line-height:12px;color:#67737a;right:573.5px;">Média diária</div>
<div class="t " style="top:827.15px;font-size:14px;line-height:14px;color:#1c2b33;right:424.5px;">R$ 5,72</div>
<div class="t " style="top:827.15px;font-size:14px;line-height:14px;color:#1c2b33;right:278px;">205</div>
<div class="t " style="top:827.15px;font-size:14px;line-height:14px;color:#1c2b33;right:132.5px;">183</div>
<div class="t" style="left:1804px;top:827.15px;font-size:14px;line-height:14px;color:#1c2b33;width:64px;overflow:hidden;">Campanha</div>
<div class="a" style="left:72px;top:866px;width:1796px;height:46px;background:#f4f5f7;"></div>
<div class="a" style="left:85px;top:877px;width:24px;height:24px;background:#fff;border:1px solid #c9cdd2;border-radius:4px;"></div>
<div class="a" style="left:149px;top:878px;width:38px;height:22px;background:#fff;border:1px solid #d5d9dd;border-radius:11px;"></div>
<div class="a" style="left:152px;top:881px;width:17px;height:17px;background:#1c2b33;border-radius:50%;"></div>
<div class="t " style="top:873.15px;font-size:14px;line-height:14px;color:#1d5fae;letter-spacing:-0.025px;left:223px;">CAMP ENG ESQUADRIAS DE ALUMIÍNIO</div>
<div class="a" style="left:577px;top:874px;width:12px;height:12px;background:#c9ced3;border-radius:50%;"></div>
<div class="t " style="top:873.15px;font-size:14px;line-height:14px;color:#1c2b33;letter-spacing:0.22px;left:597px;">Desativado</div>
<div class="a" style="left:737px;top:881px;width:13px;height:1.3px;background:#1c2b33;"></div>
<div class="a" style="left:1054px;top:881px;width:13px;height:1.3px;background:#1c2b33;"></div>
<div class="t " style="top:893.84px;font-size:12px;line-height:12px;color:#67737a;left:937.5px;">Engajamento com o p...</div>
<div class="a" style="left:1200px;top:881px;width:13px;height:1.3px;background:#1c2b33;"></div>
<div class="t " style="top:893.84px;font-size:12px;line-height:12px;color:#67737a;left:1083.5px;">Por engajamento com...</div>
<div class="t" style="right:573.5px;top:873.15px;font-size:14px;line-height:14px;color:#1c2b33;text-decoration:underline dotted #1c2b33;text-decoration-thickness:1px;text-underline-offset:2px;">R$ 15,00</div>
<div class="t " style="top:893.84px;font-size:12px;line-height:12px;color:#67737a;right:573.5px;">Intervalo diário</div>
<div class="t " style="top:873.15px;font-size:14px;line-height:14px;color:#1c2b33;right:424.5px;">R$ 0,00</div>
<div class="a" style="left:1629px;top:881px;width:13px;height:1.3px;background:#1c2b33;"></div>
<div class="a" style="left:1775px;top:881px;width:13px;height:1.3px;background:#1c2b33;"></div>
<div class="t" style="left:1804px;top:873.15px;font-size:14px;line-height:14px;color:#1c2b33;width:64px;overflow:hidden;">Campanha</div>
<div class="a" style="left:72px;top:912px;width:1796px;height:46px;background:#ffffff;"></div>
<div class="a" style="left:85px;top:923px;width:24px;height:24px;background:#fff;border:1px solid #c9cdd2;border-radius:4px;"></div>
<div class="a" style="left:149px;top:924px;width:38px;height:22px;background:#fff;border:1px solid #d5d9dd;border-radius:11px;"></div>
<div class="a" style="left:152px;top:927px;width:17px;height:17px;background:#1c2b33;border-radius:50%;"></div>
<div class="t " style="top:919.15px;font-size:14px;line-height:14px;color:#1d5fae;letter-spacing:-0.015px;left:223px;">CAMP DE LEADS</div>
<div class="a" style="left:577px;top:920px;width:12px;height:12px;background:#c9ced3;border-radius:50%;"></div>
<div class="t " style="top:919.15px;font-size:14px;line-height:14px;color:#1c2b33;letter-spacing:0.22px;left:597px;">Desativado</div>
<div class="a" style="left:737px;top:927px;width:13px;height:1.3px;background:#1c2b33;"></div>
<div class="a" style="left:1054px;top:927px;width:13px;height:1.3px;background:#1c2b33;"></div>
<div class="t " style="top:939.84px;font-size:12px;line-height:12px;color:#67737a;right:853px;">Lead da Meta</div>
<div class="a" style="left:1200px;top:927px;width:13px;height:1.3px;background:#1c2b33;"></div>
<div class="t " style="top:939.84px;font-size:12px;line-height:12px;color:#67737a;right:707px;">Por lead da Meta</div>
<div class="t " style="top:919.15px;font-size:14px;line-height:14px;color:#1c2b33;right:573.5px;">R$ 15,00</div>
<div class="t " style="top:939.84px;font-size:12px;line-height:12px;color:#67737a;right:573.5px;">Média diária</div>
<div class="t " style="top:919.15px;font-size:14px;line-height:14px;color:#1c2b33;right:424.5px;">R$ 0,34</div>
<div class="t " style="top:919.15px;font-size:14px;line-height:14px;color:#1c2b33;right:278px;">30</div>
<div class="t " style="top:919.15px;font-size:14px;line-height:14px;color:#1c2b33;right:132.5px;">28</div>
<div class="t" style="left:1804px;top:919.15px;font-size:14px;line-height:14px;color:#1c2b33;width:64px;overflow:hidden;">Campanha</div>
<div class="a" style="left:72px;top:958px;width:1796px;height:1px;background:#dfe2e5;"></div>
<div class="a" style="left:569px;top:544px;width:1px;height:489px;background:#dfe2e5;"></div>
<div class="t " style="top:968.15px;font-size:14px;line-height:14px;color:#1c2b33;left:227.5px;">Resultados de 9 campanhas</div>
<svg class="a" style="left:409px;top:968px;" width="14" height="14" viewBox="0 0 14 14"><circle cx="7" cy="7" r="6.5" fill="#1c2b33"/><rect x="6" y="6" width="2.2" height="5" fill="#fff"/><circle cx="7.1" cy="3.8" r="1.2" fill="#fff"/></svg>
<div class="a" style="left:72px;top:1033px;width:1796px;height:1px;background:#e4e6e9;"></div>
<div class="a" style="left:76px;top:1037px;width:1511px;height:7px;background:#bdbdbd;border-radius:4px;"></div>
</div></body></html>
